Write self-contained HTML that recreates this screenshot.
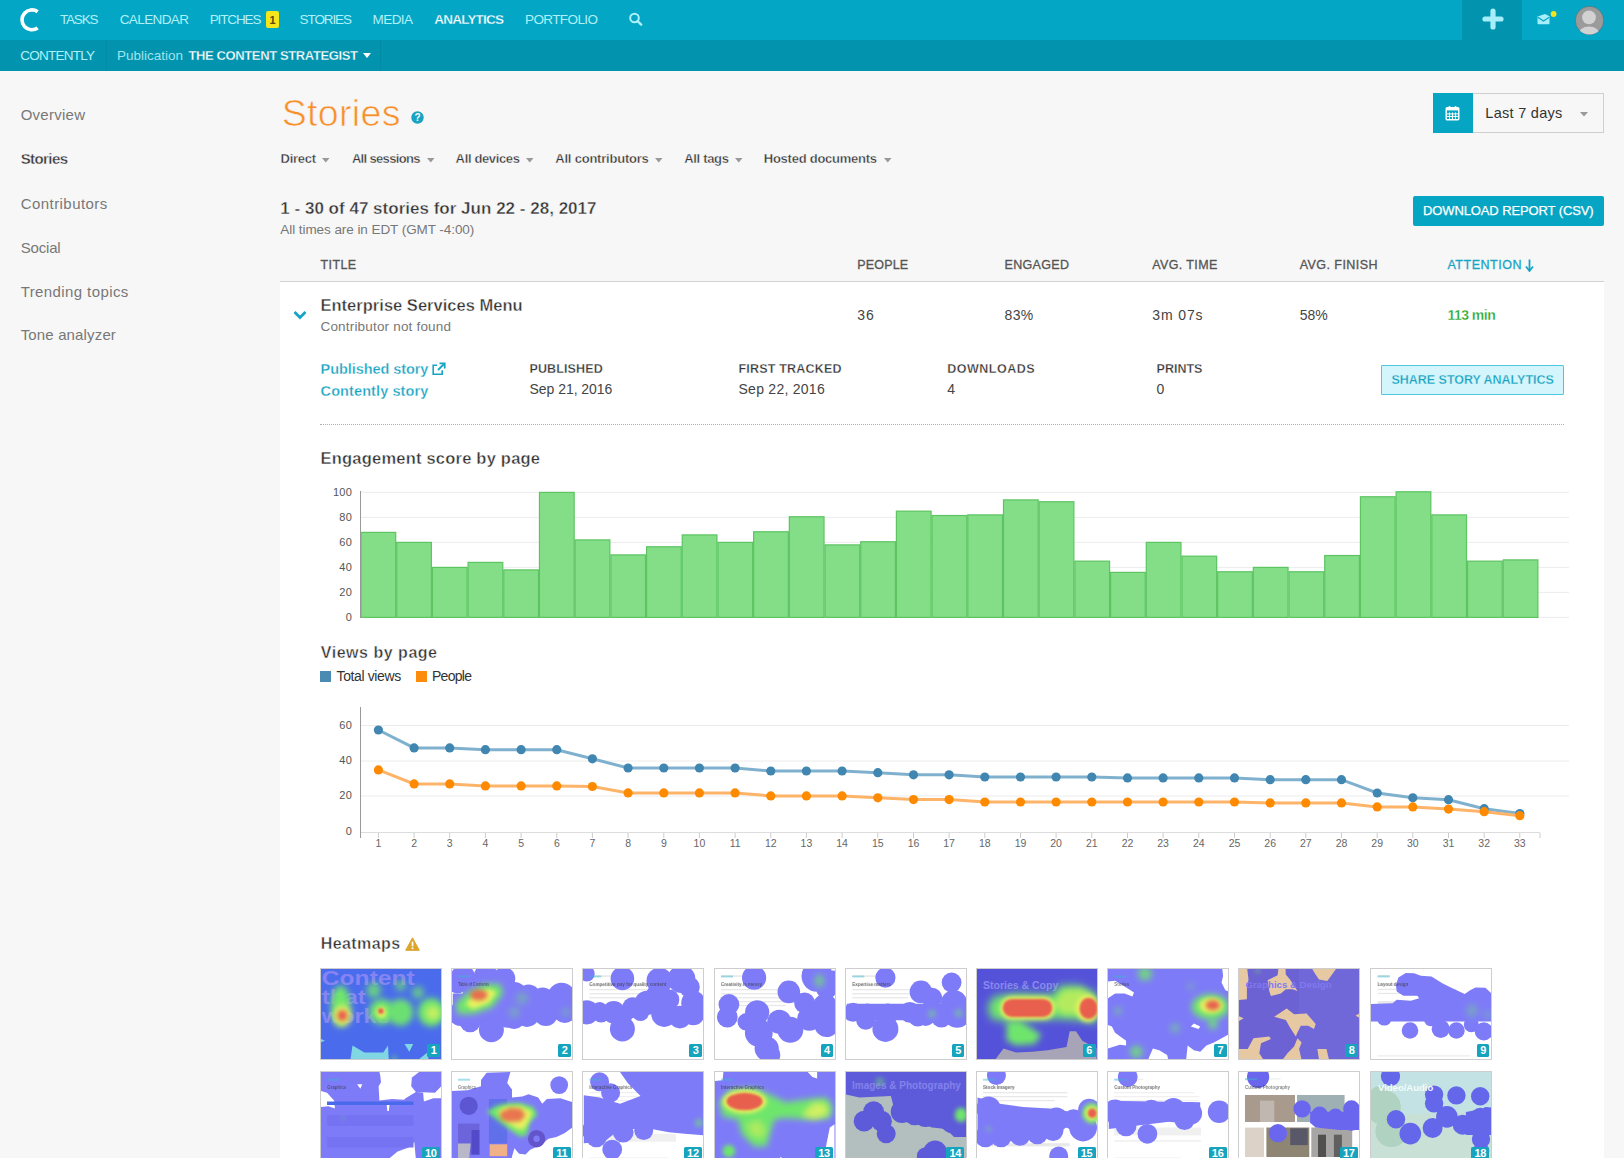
<!DOCTYPE html>
<html><head><meta charset="utf-8"><style>
html,body{margin:0;padding:0;width:1624px;height:1158px;overflow:hidden;background:#f7f7f7;font-family:"Liberation Sans", sans-serif;}
body{position:relative;}
</style></head><body>
<div style="position:absolute;left:0px;top:0px;width:1624px;height:40px;background:#03a6c5;"></div>
<div style="position:absolute;left:0px;top:40px;width:1624px;height:31px;background:#0294ae;"></div>
<div style="position:absolute;left:106px;top:40px;width:1px;height:31px;background:#028ba4;"></div>
<div style="position:absolute;left:380px;top:40px;width:1px;height:31px;background:#028ba4;"></div>
<div style="position:absolute;left:1462px;top:0px;width:60px;height:40px;background:#0294ae;"></div>
<svg style="position:absolute;left:18px;top:6px" width="24" height="28" viewBox="0 0 24 28"><path d="M19.66 5.7 A9.95 9.95 0 1 0 19.66 22.0" fill="none" stroke="#fff" stroke-width="3.6" stroke-linecap="butt"/></svg>
<div style="position:absolute;left:60.0px;top:12.83px;font-size:13.5px;line-height:13.5px;color:#b0f1f9;font-weight:400;letter-spacing:-1.191px;white-space:nowrap;">TASKS</div>
<div style="position:absolute;left:119.7px;top:12.83px;font-size:13.5px;line-height:13.5px;color:#b0f1f9;font-weight:400;letter-spacing:-0.604px;white-space:nowrap;">CALENDAR</div>
<div style="position:absolute;left:209.7px;top:12.83px;font-size:13.5px;line-height:13.5px;color:#b0f1f9;font-weight:400;letter-spacing:-1.136px;white-space:nowrap;">PITCHES</div>
<div style="position:absolute;left:299.6px;top:12.83px;font-size:13.5px;line-height:13.5px;color:#b0f1f9;font-weight:400;letter-spacing:-1.105px;white-space:nowrap;">STORIES</div>
<div style="position:absolute;left:372.6px;top:12.83px;font-size:13.5px;line-height:13.5px;color:#b0f1f9;font-weight:400;letter-spacing:-0.591px;white-space:nowrap;">MEDIA</div>
<div style="position:absolute;left:434.3px;top:12.83px;font-size:13.5px;line-height:13.5px;color:#fff;font-weight:700;letter-spacing:-0.789px;white-space:nowrap;-webkit-text-stroke:0.3px #03a6c5;">ANALYTICS</div>
<div style="position:absolute;left:525.0px;top:12.83px;font-size:13.5px;line-height:13.5px;color:#b0f1f9;font-weight:400;letter-spacing:-0.596px;white-space:nowrap;">PORTFOLIO</div>
<div style="position:absolute;left:266px;top:11px;width:13px;height:17px;background:#f4e61c;border-radius:2px;"></div>
<div style="position:absolute;left:72.5px;width:400px;text-align:center;top:14.65px;font-size:11px;line-height:11px;color:#5a4a10;font-weight:700;letter-spacing:0.000px;white-space:nowrap;">1</div>
<svg style="position:absolute;left:628px;top:12.3px" width="16" height="14" viewBox="0 0 16 14"><circle cx="6.5" cy="6" r="4.3" fill="none" stroke="#b0f1f9" stroke-width="2"/><line x1="9.6" y1="9.1" x2="13.2" y2="12.6" stroke="#b0f1f9" stroke-width="2.4" stroke-linecap="round"/></svg>
<div style="position:absolute;left:20.3px;top:48.82px;font-size:13.5px;line-height:13.5px;color:#b0f1f9;font-weight:400;letter-spacing:-0.758px;white-space:nowrap;">CONTENTLY</div>
<div style="position:absolute;left:117.0px;top:48.82px;font-size:13.5px;line-height:13.5px;color:#9fe3ee;font-weight:400;letter-spacing:-0.005px;white-space:nowrap;">Publication</div>
<div style="position:absolute;left:188.4px;top:49.25px;font-size:13px;line-height:13px;color:#fff;font-weight:700;letter-spacing:-0.373px;white-space:nowrap;-webkit-text-stroke:0.3px #0294ae;">THE CONTENT STRATEGIST</div>
<svg style="position:absolute;left:363px;top:53px" width="8" height="5"><path d="M0 0 L8 0 L4 5 Z" fill="#fff"/></svg>
<svg style="position:absolute;left:1482px;top:8px" width="22" height="22" viewBox="0 0 22 22"><path d="M11 3 V19 M3 11 H19" stroke="#a6eefa" stroke-width="5.2" stroke-linecap="round"/></svg>
<svg style="position:absolute;left:1535px;top:10px" width="24" height="18" viewBox="0 0 24 18"><path d="M2.5 6.5 L10 4 L14.5 6.3 V13.5 Q14.5 14.2 13.8 14.2 H3.2 Q2.5 14.2 2.5 13.5 Z" fill="#a6eefa"/><path d="M2.8 7.2 L8.5 11 L14.2 7.2" fill="none" stroke="#06a6c5" stroke-width="1.2"/><circle cx="18.6" cy="4" r="2.9" fill="#f5e41a"/></svg>
<svg style="position:absolute;left:1573.5px;top:4.5px" width="31" height="31" viewBox="0 0 31 31"><defs><clipPath id="av"><circle cx="15.5" cy="15.5" r="14"/></clipPath></defs><circle cx="15.5" cy="15.5" r="14.2" fill="#9b9b9b" stroke="#3f6f7a" stroke-width="0.6"/><g clip-path="url(#av)"><circle cx="15" cy="12.3" r="6.9" fill="#d2d2d2"/><ellipse cx="15" cy="30" rx="11" ry="8.5" fill="#d2d2d2"/></g></svg>
<div style="position:absolute;left:20.7px;top:107.25px;font-size:15px;line-height:15px;color:#777;font-weight:400;letter-spacing:0.255px;white-space:nowrap;">Overview</div>
<div style="position:absolute;left:20.7px;top:151.25px;font-size:15px;line-height:15px;color:#333;font-weight:700;letter-spacing:-0.593px;white-space:nowrap;-webkit-text-stroke:0.35px #f7f7f7;">Stories</div>
<div style="position:absolute;left:20.7px;top:195.55px;font-size:15px;line-height:15px;color:#777;font-weight:400;letter-spacing:0.445px;white-space:nowrap;">Contributors</div>
<div style="position:absolute;left:20.7px;top:239.55px;font-size:15px;line-height:15px;color:#777;font-weight:400;letter-spacing:-0.172px;white-space:nowrap;">Social</div>
<div style="position:absolute;left:20.7px;top:283.55px;font-size:15px;line-height:15px;color:#777;font-weight:400;letter-spacing:0.400px;white-space:nowrap;">Trending topics</div>
<div style="position:absolute;left:20.7px;top:327.45px;font-size:15px;line-height:15px;color:#777;font-weight:400;letter-spacing:0.149px;white-space:nowrap;">Tone analyzer</div>
<div style="position:absolute;left:281.8px;top:95.42px;font-size:37.5px;line-height:37.5px;color:#f7902c;font-weight:400;letter-spacing:0.314px;white-space:nowrap;-webkit-text-stroke:0.7px #f7f7f7;">Stories</div>
<svg style="position:absolute;left:411px;top:110.5px" width="13" height="13" viewBox="0 0 13 13"><circle cx="6.5" cy="6.5" r="6.2" fill="#18a3c3"/><text x="6.5" y="10.3" font-family="Liberation Sans" font-weight="700" font-size="10" fill="#fff" text-anchor="middle">?</text></svg>
<div style="position:absolute;left:280.5px;top:151.75px;font-size:13px;line-height:13px;color:#333;font-weight:700;letter-spacing:-0.232px;white-space:nowrap;-webkit-text-stroke:0.35px #f7f7f7;">Direct</div>
<svg style="position:absolute;left:322.3px;top:157.5px" width="8" height="5"><path d="M0 0 L7.5 0 L3.75 4.5 Z" fill="#999"/></svg>
<div style="position:absolute;left:351.9px;top:151.75px;font-size:13px;line-height:13px;color:#333;font-weight:700;letter-spacing:-0.661px;white-space:nowrap;-webkit-text-stroke:0.35px #f7f7f7;">All sessions</div>
<svg style="position:absolute;left:426.5px;top:157.5px" width="8" height="5"><path d="M0 0 L7.5 0 L3.75 4.5 Z" fill="#999"/></svg>
<div style="position:absolute;left:455.6px;top:151.75px;font-size:13px;line-height:13px;color:#333;font-weight:700;letter-spacing:-0.354px;white-space:nowrap;-webkit-text-stroke:0.35px #f7f7f7;">All devices</div>
<svg style="position:absolute;left:526.0px;top:157.5px" width="8" height="5"><path d="M0 0 L7.5 0 L3.75 4.5 Z" fill="#999"/></svg>
<div style="position:absolute;left:555.3px;top:151.75px;font-size:13px;line-height:13px;color:#333;font-weight:700;letter-spacing:-0.219px;white-space:nowrap;-webkit-text-stroke:0.35px #f7f7f7;">All contributors</div>
<svg style="position:absolute;left:655.0px;top:157.5px" width="8" height="5"><path d="M0 0 L7.5 0 L3.75 4.5 Z" fill="#999"/></svg>
<div style="position:absolute;left:684.2px;top:151.75px;font-size:13px;line-height:13px;color:#333;font-weight:700;letter-spacing:-0.310px;white-space:nowrap;-webkit-text-stroke:0.35px #f7f7f7;">All tags</div>
<svg style="position:absolute;left:735.0px;top:157.5px" width="8" height="5"><path d="M0 0 L7.5 0 L3.75 4.5 Z" fill="#999"/></svg>
<div style="position:absolute;left:763.8px;top:151.75px;font-size:13px;line-height:13px;color:#333;font-weight:700;letter-spacing:-0.254px;white-space:nowrap;-webkit-text-stroke:0.35px #f7f7f7;">Hosted documents</div>
<svg style="position:absolute;left:883.5px;top:157.5px" width="8" height="5"><path d="M0 0 L7.5 0 L3.75 4.5 Z" fill="#999"/></svg>
<div style="position:absolute;left:1433px;top:93px;width:170px;height:39px;border:1px solid #cfcfcf;background:#f7f7f7;box-sizing:border-box;width:171px;height:40px"></div>
<div style="position:absolute;left:1433px;top:93px;width:40px;height:40px;background:#07a5c4;"></div>
<svg style="position:absolute;left:1445px;top:105px" width="15" height="16" viewBox="0 0 15 16"><rect x="1.2" y="2.8" width="12.6" height="12" rx="1" fill="none" stroke="#fff" stroke-width="1.4"/><rect x="1.2" y="2.8" width="12.6" height="2.6" fill="#fff"/><path d="M4.5 7.5 V14.5 M7.5 7.5 V14.5 M10.5 7.5 V14.5 M1.5 8.9 H13.5 M1.5 11.4 H13.5" stroke="#fff" stroke-width="1"/><rect x="3.7" y="1" width="1.6" height="3" fill="#fff"/><rect x="9.7" y="1" width="1.6" height="3" fill="#fff"/></svg>
<div style="position:absolute;left:1485.3px;top:105.97px;font-size:14.5px;line-height:14.5px;color:#333;font-weight:400;letter-spacing:0.283px;white-space:nowrap;">Last 7 days</div>
<svg style="position:absolute;left:1580px;top:111.5px" width="8" height="5"><path d="M0 0 L8 0 L4 4.5 Z" fill="#999"/></svg>
<div style="position:absolute;left:280.3px;top:199.65px;font-size:17px;line-height:17px;color:#333;font-weight:700;letter-spacing:0.015px;white-space:nowrap;-webkit-text-stroke:0.4px #f7f7f7;">1 - 30 of 47 stories for Jun 22 - 28, 2017</div>
<div style="position:absolute;left:280.3px;top:223.12px;font-size:13.5px;line-height:13.5px;color:#777;font-weight:400;letter-spacing:-0.066px;white-space:nowrap;">All times are in EDT (GMT -4:00)</div>
<div style="position:absolute;left:1413px;top:196px;width:191px;height:30px;background:#07a5c4;border-radius:2px"></div>
<div style="position:absolute;left:1423.0px;top:204.35px;font-size:13px;line-height:13px;color:#fff;font-weight:400;letter-spacing:-0.114px;white-space:nowrap;-webkit-text-stroke:0.25px #fff;">DOWNLOAD REPORT (CSV)</div>
<div style="position:absolute;left:320.6px;top:259.07px;font-size:12.5px;line-height:12.5px;color:#555;font-weight:400;letter-spacing:0.388px;white-space:nowrap;-webkit-text-stroke:0.3px #555;">TITLE</div>
<div style="position:absolute;left:857.2px;top:259.07px;font-size:12.5px;line-height:12.5px;color:#555;font-weight:400;letter-spacing:0.194px;white-space:nowrap;-webkit-text-stroke:0.3px #555;">PEOPLE</div>
<div style="position:absolute;left:1004.5px;top:259.07px;font-size:12.5px;line-height:12.5px;color:#555;font-weight:400;letter-spacing:0.331px;white-space:nowrap;-webkit-text-stroke:0.3px #555;">ENGAGED</div>
<div style="position:absolute;left:1152.3px;top:259.07px;font-size:12.5px;line-height:12.5px;color:#555;font-weight:400;letter-spacing:0.367px;white-space:nowrap;-webkit-text-stroke:0.3px #555;">AVG. TIME</div>
<div style="position:absolute;left:1299.7px;top:259.07px;font-size:12.5px;line-height:12.5px;color:#555;font-weight:400;letter-spacing:0.441px;white-space:nowrap;-webkit-text-stroke:0.3px #555;">AVG. FINISH</div>
<div style="position:absolute;left:1447.4px;top:259.07px;font-size:12.5px;line-height:12.5px;color:#18a5c5;font-weight:400;letter-spacing:0.537px;white-space:nowrap;-webkit-text-stroke:0.3px #18a5c5;">ATTENTION</div>
<svg style="position:absolute;left:1525px;top:259px" width="9" height="13" viewBox="0 0 9 13"><path d="M4.5 0.5 V11" stroke="#18a5c5" stroke-width="1.8"/><path d="M1 7.5 L4.5 12 L8 7.5" fill="none" stroke="#18a5c5" stroke-width="1.8"/></svg>
<div style="position:absolute;left:280px;top:282px;width:1324px;height:876px;background:#fff;"></div>
<div style="position:absolute;left:280px;top:281px;width:1324px;height:1px;background:#d2d2d2;"></div>
<svg style="position:absolute;left:292px;top:309px" width="16" height="12" viewBox="0 0 16 12"><path d="M2.5 3 L8 8.5 L13.5 3" fill="none" stroke="#17a4c4" stroke-width="2.8"/></svg>
<div style="position:absolute;left:320.5px;top:297.18px;font-size:16.5px;line-height:16.5px;color:#333;font-weight:700;letter-spacing:0.015px;white-space:nowrap;-webkit-text-stroke:0.4px #fff;">Enterprise Services Menu</div>
<div style="position:absolute;left:320.5px;top:319.52px;font-size:13.5px;line-height:13.5px;color:#777;font-weight:400;letter-spacing:0.183px;white-space:nowrap;">Contributor not found</div>
<div style="position:absolute;left:857.2px;top:308.30px;font-size:14px;line-height:14px;color:#444;font-weight:400;letter-spacing:1.122px;white-space:nowrap;">36</div>
<div style="position:absolute;left:1004.5px;top:308.30px;font-size:14px;line-height:14px;color:#444;font-weight:400;letter-spacing:0.384px;white-space:nowrap;">83%</div>
<div style="position:absolute;left:1152.3px;top:308.30px;font-size:14px;line-height:14px;color:#444;font-weight:400;letter-spacing:0.876px;white-space:nowrap;">3m 07s</div>
<div style="position:absolute;left:1299.7px;top:308.30px;font-size:14px;line-height:14px;color:#444;font-weight:400;letter-spacing:-0.016px;white-space:nowrap;">58%</div>
<div style="position:absolute;left:1447.4px;top:308.30px;font-size:14px;line-height:14px;color:#21a51f;font-weight:700;letter-spacing:-0.513px;white-space:nowrap;-webkit-text-stroke:0.3px #fff;">113 min</div>
<div style="position:absolute;left:320.6px;top:361.98px;font-size:14.5px;line-height:14.5px;color:#18a4c4;font-weight:700;letter-spacing:-0.077px;white-space:nowrap;-webkit-text-stroke:0.3px #fff;">Published story</div>
<svg style="position:absolute;left:431px;top:362px" width="15" height="14" viewBox="0 0 15 14"><path d="M6 3.2 H2.2 V12.2 H11.2 V8.2" fill="none" stroke="#18a4c4" stroke-width="1.6"/><path d="M7 8 L13 2" stroke="#18a4c4" stroke-width="1.8"/><path d="M8.5 1.3 H13.7 V6.5" fill="none" stroke="#18a4c4" stroke-width="1.8"/></svg>
<div style="position:absolute;left:320.6px;top:383.98px;font-size:14.5px;line-height:14.5px;color:#18a4c4;font-weight:700;letter-spacing:0.097px;white-space:nowrap;-webkit-text-stroke:0.3px #fff;">Contently story</div>
<div style="position:absolute;left:529.5px;top:362.68px;font-size:12.5px;line-height:12.5px;color:#333;font-weight:700;letter-spacing:0.121px;white-space:nowrap;-webkit-text-stroke:0.3px #fff;">PUBLISHED</div>
<div style="position:absolute;left:529.5px;top:382.10px;font-size:14px;line-height:14px;color:#444;font-weight:400;letter-spacing:-0.036px;white-space:nowrap;">Sep 21, 2016</div>
<div style="position:absolute;left:738.5px;top:362.68px;font-size:12.5px;line-height:12.5px;color:#333;font-weight:700;letter-spacing:0.191px;white-space:nowrap;-webkit-text-stroke:0.3px #fff;">FIRST TRACKED</div>
<div style="position:absolute;left:738.5px;top:382.10px;font-size:14px;line-height:14px;color:#444;font-weight:400;letter-spacing:0.264px;white-space:nowrap;">Sep 22, 2016</div>
<div style="position:absolute;left:947.2px;top:362.68px;font-size:12.5px;line-height:12.5px;color:#333;font-weight:700;letter-spacing:0.521px;white-space:nowrap;-webkit-text-stroke:0.3px #fff;">DOWNLOADS</div>
<div style="position:absolute;left:947.2px;top:382.10px;font-size:14px;line-height:14px;color:#444;font-weight:400;letter-spacing:0.300px;white-space:nowrap;">4</div>
<div style="position:absolute;left:1156.6px;top:362.68px;font-size:12.5px;line-height:12.5px;color:#333;font-weight:700;letter-spacing:-0.009px;white-space:nowrap;-webkit-text-stroke:0.3px #fff;">PRINTS</div>
<div style="position:absolute;left:1156.6px;top:382.10px;font-size:14px;line-height:14px;color:#444;font-weight:400;letter-spacing:0.300px;white-space:nowrap;">0</div>
<div style="position:absolute;left:1381px;top:365px;width:183px;height:30px;box-sizing:border-box;background:#d3f5fb;border:1px solid #4fc7dc;border-radius:1px"></div>
<div style="position:absolute;left:1391.5px;top:373.98px;font-size:12.5px;line-height:12.5px;color:#18a0c0;font-weight:700;letter-spacing:-0.023px;white-space:nowrap;-webkit-text-stroke:0.3px #d3f5fb;">SHARE STORY ANALYTICS</div>
<div style="position:absolute;left:320px;top:424px;width:1244px;height:0;border-top:1px dotted #b0b0b0"></div>
<div style="position:absolute;left:320.5px;top:449.98px;font-size:16.5px;line-height:16.5px;color:#333;font-weight:700;letter-spacing:0.214px;white-space:nowrap;-webkit-text-stroke:0.4px #fff;">Engagement score by page</div>
<svg style="position:absolute;left:0;top:0" width="1624" height="1158"><line x1="361" y1="617.4" x2="1569" y2="617.4" stroke="#ececec" stroke-width="1"/><line x1="361" y1="592.4" x2="1569" y2="592.4" stroke="#ececec" stroke-width="1"/><line x1="361" y1="567.4" x2="1569" y2="567.4" stroke="#ececec" stroke-width="1"/><line x1="361" y1="542.4" x2="1569" y2="542.4" stroke="#ececec" stroke-width="1"/><line x1="361" y1="517.4" x2="1569" y2="517.4" stroke="#ececec" stroke-width="1"/><line x1="361" y1="492.4" x2="1569" y2="492.4" stroke="#ececec" stroke-width="1"/><rect x="361.00" y="532.40" width="34.69" height="85.00" fill="#84de88" stroke="#5cc461" stroke-width="1.2"/><rect x="396.69" y="542.40" width="34.69" height="75.00" fill="#84de88" stroke="#5cc461" stroke-width="1.2"/><rect x="432.39" y="567.40" width="34.69" height="50.00" fill="#84de88" stroke="#5cc461" stroke-width="1.2"/><rect x="468.08" y="562.40" width="34.69" height="55.00" fill="#84de88" stroke="#5cc461" stroke-width="1.2"/><rect x="503.78" y="569.90" width="34.69" height="47.50" fill="#84de88" stroke="#5cc461" stroke-width="1.2"/><rect x="539.47" y="492.40" width="34.69" height="125.00" fill="#84de88" stroke="#5cc461" stroke-width="1.2"/><rect x="575.16" y="539.90" width="34.69" height="77.50" fill="#84de88" stroke="#5cc461" stroke-width="1.2"/><rect x="610.86" y="554.90" width="34.69" height="62.50" fill="#84de88" stroke="#5cc461" stroke-width="1.2"/><rect x="646.55" y="546.77" width="34.69" height="70.62" fill="#84de88" stroke="#5cc461" stroke-width="1.2"/><rect x="682.25" y="534.90" width="34.69" height="82.50" fill="#84de88" stroke="#5cc461" stroke-width="1.2"/><rect x="717.94" y="542.40" width="34.69" height="75.00" fill="#84de88" stroke="#5cc461" stroke-width="1.2"/><rect x="753.63" y="531.77" width="34.69" height="85.62" fill="#84de88" stroke="#5cc461" stroke-width="1.2"/><rect x="789.33" y="516.77" width="34.69" height="100.62" fill="#84de88" stroke="#5cc461" stroke-width="1.2"/><rect x="825.02" y="544.90" width="34.69" height="72.50" fill="#84de88" stroke="#5cc461" stroke-width="1.2"/><rect x="860.72" y="541.77" width="34.69" height="75.62" fill="#84de88" stroke="#5cc461" stroke-width="1.2"/><rect x="896.41" y="511.15" width="34.69" height="106.25" fill="#84de88" stroke="#5cc461" stroke-width="1.2"/><rect x="932.10" y="515.52" width="34.69" height="101.88" fill="#84de88" stroke="#5cc461" stroke-width="1.2"/><rect x="967.80" y="514.90" width="34.69" height="102.50" fill="#84de88" stroke="#5cc461" stroke-width="1.2"/><rect x="1003.49" y="499.90" width="34.69" height="117.50" fill="#84de88" stroke="#5cc461" stroke-width="1.2"/><rect x="1039.18" y="501.77" width="34.69" height="115.62" fill="#84de88" stroke="#5cc461" stroke-width="1.2"/><rect x="1074.88" y="561.15" width="34.69" height="56.25" fill="#84de88" stroke="#5cc461" stroke-width="1.2"/><rect x="1110.57" y="572.40" width="34.69" height="45.00" fill="#84de88" stroke="#5cc461" stroke-width="1.2"/><rect x="1146.27" y="542.40" width="34.69" height="75.00" fill="#84de88" stroke="#5cc461" stroke-width="1.2"/><rect x="1181.96" y="556.15" width="34.69" height="61.25" fill="#84de88" stroke="#5cc461" stroke-width="1.2"/><rect x="1217.65" y="571.77" width="34.69" height="45.62" fill="#84de88" stroke="#5cc461" stroke-width="1.2"/><rect x="1253.35" y="567.40" width="34.69" height="50.00" fill="#84de88" stroke="#5cc461" stroke-width="1.2"/><rect x="1289.04" y="571.77" width="34.69" height="45.62" fill="#84de88" stroke="#5cc461" stroke-width="1.2"/><rect x="1324.74" y="555.52" width="34.69" height="61.88" fill="#84de88" stroke="#5cc461" stroke-width="1.2"/><rect x="1360.43" y="496.77" width="34.69" height="120.62" fill="#84de88" stroke="#5cc461" stroke-width="1.2"/><rect x="1396.12" y="491.77" width="34.69" height="125.62" fill="#84de88" stroke="#5cc461" stroke-width="1.2"/><rect x="1431.82" y="514.90" width="34.69" height="102.50" fill="#84de88" stroke="#5cc461" stroke-width="1.2"/><rect x="1467.51" y="561.15" width="34.69" height="56.25" fill="#84de88" stroke="#5cc461" stroke-width="1.2"/><rect x="1503.21" y="559.90" width="34.69" height="57.50" fill="#84de88" stroke="#5cc461" stroke-width="1.2"/><line x1="360.5" y1="491" x2="360.5" y2="618" stroke="#999" stroke-width="1"/></svg>
<div style="position:absolute;right:1272.0px;top:611.75px;font-size:11px;line-height:11px;color:#555;font-weight:400;letter-spacing:0.200px;white-space:nowrap;">0</div>
<div style="position:absolute;right:1272.0px;top:586.75px;font-size:11px;line-height:11px;color:#555;font-weight:400;letter-spacing:0.200px;white-space:nowrap;">20</div>
<div style="position:absolute;right:1272.0px;top:561.75px;font-size:11px;line-height:11px;color:#555;font-weight:400;letter-spacing:0.200px;white-space:nowrap;">40</div>
<div style="position:absolute;right:1272.0px;top:536.75px;font-size:11px;line-height:11px;color:#555;font-weight:400;letter-spacing:0.200px;white-space:nowrap;">60</div>
<div style="position:absolute;right:1272.0px;top:511.75px;font-size:11px;line-height:11px;color:#555;font-weight:400;letter-spacing:0.200px;white-space:nowrap;">80</div>
<div style="position:absolute;right:1272.0px;top:486.75px;font-size:11px;line-height:11px;color:#555;font-weight:400;letter-spacing:0.200px;white-space:nowrap;">100</div>
<div style="position:absolute;left:320.8px;top:645.40px;font-size:16px;line-height:16px;color:#333;font-weight:700;letter-spacing:0.518px;white-space:nowrap;-webkit-text-stroke:0.4px #fff;">Views by page</div>
<div style="position:absolute;left:320px;top:671px;width:11px;height:11px;background:#4a8ab3;"></div>
<div style="position:absolute;left:336.6px;top:669.30px;font-size:14px;line-height:14px;color:#333;font-weight:400;letter-spacing:-0.387px;white-space:nowrap;">Total views</div>
<div style="position:absolute;left:416px;top:671px;width:11px;height:11px;background:#fd8b0c;"></div>
<div style="position:absolute;left:432.0px;top:669.30px;font-size:14px;line-height:14px;color:#333;font-weight:400;letter-spacing:-0.719px;white-space:nowrap;">People</div>
<svg style="position:absolute;left:0;top:0" width="1624" height="1158"><line x1="361" y1="725.5" x2="1569" y2="725.5" stroke="#ececec" stroke-width="1"/><line x1="361" y1="761" x2="1569" y2="761" stroke="#ececec" stroke-width="1"/><line x1="361" y1="796" x2="1569" y2="796" stroke="#ececec" stroke-width="1"/><line x1="361" y1="832.5" x2="1540" y2="832.5" stroke="#ddd" stroke-width="1"/><line x1="360.5" y1="707" x2="360.5" y2="838" stroke="#999" stroke-width="1"/><line x1="378.4" y1="833" x2="378.4" y2="838" stroke="#ccc" stroke-width="1"/><line x1="414.1" y1="833" x2="414.1" y2="838" stroke="#ccc" stroke-width="1"/><line x1="449.7" y1="833" x2="449.7" y2="838" stroke="#ccc" stroke-width="1"/><line x1="485.4" y1="833" x2="485.4" y2="838" stroke="#ccc" stroke-width="1"/><line x1="521.1" y1="833" x2="521.1" y2="838" stroke="#ccc" stroke-width="1"/><line x1="556.8" y1="833" x2="556.8" y2="838" stroke="#ccc" stroke-width="1"/><line x1="592.4" y1="833" x2="592.4" y2="838" stroke="#ccc" stroke-width="1"/><line x1="628.1" y1="833" x2="628.1" y2="838" stroke="#ccc" stroke-width="1"/><line x1="663.8" y1="833" x2="663.8" y2="838" stroke="#ccc" stroke-width="1"/><line x1="699.4" y1="833" x2="699.4" y2="838" stroke="#ccc" stroke-width="1"/><line x1="735.1" y1="833" x2="735.1" y2="838" stroke="#ccc" stroke-width="1"/><line x1="770.8" y1="833" x2="770.8" y2="838" stroke="#ccc" stroke-width="1"/><line x1="806.4" y1="833" x2="806.4" y2="838" stroke="#ccc" stroke-width="1"/><line x1="842.1" y1="833" x2="842.1" y2="838" stroke="#ccc" stroke-width="1"/><line x1="877.8" y1="833" x2="877.8" y2="838" stroke="#ccc" stroke-width="1"/><line x1="913.5" y1="833" x2="913.5" y2="838" stroke="#ccc" stroke-width="1"/><line x1="949.1" y1="833" x2="949.1" y2="838" stroke="#ccc" stroke-width="1"/><line x1="984.8" y1="833" x2="984.8" y2="838" stroke="#ccc" stroke-width="1"/><line x1="1020.5" y1="833" x2="1020.5" y2="838" stroke="#ccc" stroke-width="1"/><line x1="1056.1" y1="833" x2="1056.1" y2="838" stroke="#ccc" stroke-width="1"/><line x1="1091.8" y1="833" x2="1091.8" y2="838" stroke="#ccc" stroke-width="1"/><line x1="1127.5" y1="833" x2="1127.5" y2="838" stroke="#ccc" stroke-width="1"/><line x1="1163.1" y1="833" x2="1163.1" y2="838" stroke="#ccc" stroke-width="1"/><line x1="1198.8" y1="833" x2="1198.8" y2="838" stroke="#ccc" stroke-width="1"/><line x1="1234.5" y1="833" x2="1234.5" y2="838" stroke="#ccc" stroke-width="1"/><line x1="1270.2" y1="833" x2="1270.2" y2="838" stroke="#ccc" stroke-width="1"/><line x1="1305.8" y1="833" x2="1305.8" y2="838" stroke="#ccc" stroke-width="1"/><line x1="1341.5" y1="833" x2="1341.5" y2="838" stroke="#ccc" stroke-width="1"/><line x1="1377.2" y1="833" x2="1377.2" y2="838" stroke="#ccc" stroke-width="1"/><line x1="1412.8" y1="833" x2="1412.8" y2="838" stroke="#ccc" stroke-width="1"/><line x1="1448.5" y1="833" x2="1448.5" y2="838" stroke="#ccc" stroke-width="1"/><line x1="1484.2" y1="833" x2="1484.2" y2="838" stroke="#ccc" stroke-width="1"/><line x1="1519.8" y1="833" x2="1519.8" y2="838" stroke="#ccc" stroke-width="1"/><line x1="1540.0" y1="833" x2="1540.0" y2="838" stroke="#ccc" stroke-width="1"/><polyline points="378.4,730.0 414.1,747.9 449.7,747.9 485.4,749.7 521.1,749.7 556.8,749.7 592.4,758.8 628.1,768.0 663.8,768.0 699.4,768.0 735.1,768.0 770.8,771.0 806.4,771.0 842.1,771.0 877.8,772.7 913.5,774.8 949.1,774.8 984.8,777.0 1020.5,777.0 1056.1,777.0 1091.8,777.0 1127.5,777.9 1163.1,777.9 1198.8,777.9 1234.5,777.9 1270.2,779.7 1305.8,779.7 1341.5,779.7 1377.2,793.0 1412.8,797.8 1448.5,799.7 1484.2,808.7 1519.8,813.5" fill="none" stroke="#7fb1cf" stroke-width="3"/><circle cx="378.4" cy="730.0" r="4.6" fill="#4086b0"/><circle cx="414.1" cy="747.9" r="4.6" fill="#4086b0"/><circle cx="449.7" cy="747.9" r="4.6" fill="#4086b0"/><circle cx="485.4" cy="749.7" r="4.6" fill="#4086b0"/><circle cx="521.1" cy="749.7" r="4.6" fill="#4086b0"/><circle cx="556.8" cy="749.7" r="4.6" fill="#4086b0"/><circle cx="592.4" cy="758.8" r="4.6" fill="#4086b0"/><circle cx="628.1" cy="768.0" r="4.6" fill="#4086b0"/><circle cx="663.8" cy="768.0" r="4.6" fill="#4086b0"/><circle cx="699.4" cy="768.0" r="4.6" fill="#4086b0"/><circle cx="735.1" cy="768.0" r="4.6" fill="#4086b0"/><circle cx="770.8" cy="771.0" r="4.6" fill="#4086b0"/><circle cx="806.4" cy="771.0" r="4.6" fill="#4086b0"/><circle cx="842.1" cy="771.0" r="4.6" fill="#4086b0"/><circle cx="877.8" cy="772.7" r="4.6" fill="#4086b0"/><circle cx="913.5" cy="774.8" r="4.6" fill="#4086b0"/><circle cx="949.1" cy="774.8" r="4.6" fill="#4086b0"/><circle cx="984.8" cy="777.0" r="4.6" fill="#4086b0"/><circle cx="1020.5" cy="777.0" r="4.6" fill="#4086b0"/><circle cx="1056.1" cy="777.0" r="4.6" fill="#4086b0"/><circle cx="1091.8" cy="777.0" r="4.6" fill="#4086b0"/><circle cx="1127.5" cy="777.9" r="4.6" fill="#4086b0"/><circle cx="1163.1" cy="777.9" r="4.6" fill="#4086b0"/><circle cx="1198.8" cy="777.9" r="4.6" fill="#4086b0"/><circle cx="1234.5" cy="777.9" r="4.6" fill="#4086b0"/><circle cx="1270.2" cy="779.7" r="4.6" fill="#4086b0"/><circle cx="1305.8" cy="779.7" r="4.6" fill="#4086b0"/><circle cx="1341.5" cy="779.7" r="4.6" fill="#4086b0"/><circle cx="1377.2" cy="793.0" r="4.6" fill="#4086b0"/><circle cx="1412.8" cy="797.8" r="4.6" fill="#4086b0"/><circle cx="1448.5" cy="799.7" r="4.6" fill="#4086b0"/><circle cx="1484.2" cy="808.7" r="4.6" fill="#4086b0"/><circle cx="1519.8" cy="813.5" r="4.6" fill="#4086b0"/><polyline points="378.4,769.9 414.1,783.9 449.7,783.9 485.4,785.9 521.1,785.9 556.8,785.9 592.4,786.5 628.1,792.9 663.8,792.9 699.4,792.9 735.1,792.9 770.8,795.9 806.4,795.9 842.1,795.9 877.8,797.8 913.5,799.6 949.1,799.6 984.8,802.0 1020.5,802.0 1056.1,802.0 1091.8,802.0 1127.5,802.0 1163.1,802.0 1198.8,802.0 1234.5,802.0 1270.2,802.9 1305.8,802.9 1341.5,802.9 1377.2,806.9 1412.8,806.9 1448.5,809.1 1484.2,811.7 1519.8,815.7" fill="none" stroke="#fdb468" stroke-width="3"/><circle cx="378.4" cy="769.9" r="4.6" fill="#fd8a00"/><circle cx="414.1" cy="783.9" r="4.6" fill="#fd8a00"/><circle cx="449.7" cy="783.9" r="4.6" fill="#fd8a00"/><circle cx="485.4" cy="785.9" r="4.6" fill="#fd8a00"/><circle cx="521.1" cy="785.9" r="4.6" fill="#fd8a00"/><circle cx="556.8" cy="785.9" r="4.6" fill="#fd8a00"/><circle cx="592.4" cy="786.5" r="4.6" fill="#fd8a00"/><circle cx="628.1" cy="792.9" r="4.6" fill="#fd8a00"/><circle cx="663.8" cy="792.9" r="4.6" fill="#fd8a00"/><circle cx="699.4" cy="792.9" r="4.6" fill="#fd8a00"/><circle cx="735.1" cy="792.9" r="4.6" fill="#fd8a00"/><circle cx="770.8" cy="795.9" r="4.6" fill="#fd8a00"/><circle cx="806.4" cy="795.9" r="4.6" fill="#fd8a00"/><circle cx="842.1" cy="795.9" r="4.6" fill="#fd8a00"/><circle cx="877.8" cy="797.8" r="4.6" fill="#fd8a00"/><circle cx="913.5" cy="799.6" r="4.6" fill="#fd8a00"/><circle cx="949.1" cy="799.6" r="4.6" fill="#fd8a00"/><circle cx="984.8" cy="802.0" r="4.6" fill="#fd8a00"/><circle cx="1020.5" cy="802.0" r="4.6" fill="#fd8a00"/><circle cx="1056.1" cy="802.0" r="4.6" fill="#fd8a00"/><circle cx="1091.8" cy="802.0" r="4.6" fill="#fd8a00"/><circle cx="1127.5" cy="802.0" r="4.6" fill="#fd8a00"/><circle cx="1163.1" cy="802.0" r="4.6" fill="#fd8a00"/><circle cx="1198.8" cy="802.0" r="4.6" fill="#fd8a00"/><circle cx="1234.5" cy="802.0" r="4.6" fill="#fd8a00"/><circle cx="1270.2" cy="802.9" r="4.6" fill="#fd8a00"/><circle cx="1305.8" cy="802.9" r="4.6" fill="#fd8a00"/><circle cx="1341.5" cy="802.9" r="4.6" fill="#fd8a00"/><circle cx="1377.2" cy="806.9" r="4.6" fill="#fd8a00"/><circle cx="1412.8" cy="806.9" r="4.6" fill="#fd8a00"/><circle cx="1448.5" cy="809.1" r="4.6" fill="#fd8a00"/><circle cx="1484.2" cy="811.7" r="4.6" fill="#fd8a00"/><circle cx="1519.8" cy="815.7" r="4.6" fill="#fd8a00"/></svg>
<div style="position:absolute;right:1272.0px;top:826.15px;font-size:11px;line-height:11px;color:#555;font-weight:400;letter-spacing:0.200px;white-space:nowrap;">0</div>
<div style="position:absolute;right:1272.0px;top:790.15px;font-size:11px;line-height:11px;color:#555;font-weight:400;letter-spacing:0.200px;white-space:nowrap;">20</div>
<div style="position:absolute;right:1272.0px;top:755.15px;font-size:11px;line-height:11px;color:#555;font-weight:400;letter-spacing:0.200px;white-space:nowrap;">40</div>
<div style="position:absolute;right:1272.0px;top:719.65px;font-size:11px;line-height:11px;color:#555;font-weight:400;letter-spacing:0.200px;white-space:nowrap;">60</div>
<div style="position:absolute;left:178.4px;width:400px;text-align:center;top:837.88px;font-size:10.5px;line-height:10.5px;color:#666;font-weight:400;letter-spacing:0.000px;white-space:nowrap;">1</div>
<div style="position:absolute;left:214.1px;width:400px;text-align:center;top:837.88px;font-size:10.5px;line-height:10.5px;color:#666;font-weight:400;letter-spacing:0.000px;white-space:nowrap;">2</div>
<div style="position:absolute;left:249.7px;width:400px;text-align:center;top:837.88px;font-size:10.5px;line-height:10.5px;color:#666;font-weight:400;letter-spacing:0.000px;white-space:nowrap;">3</div>
<div style="position:absolute;left:285.4px;width:400px;text-align:center;top:837.88px;font-size:10.5px;line-height:10.5px;color:#666;font-weight:400;letter-spacing:0.000px;white-space:nowrap;">4</div>
<div style="position:absolute;left:321.1px;width:400px;text-align:center;top:837.88px;font-size:10.5px;line-height:10.5px;color:#666;font-weight:400;letter-spacing:0.000px;white-space:nowrap;">5</div>
<div style="position:absolute;left:356.8px;width:400px;text-align:center;top:837.88px;font-size:10.5px;line-height:10.5px;color:#666;font-weight:400;letter-spacing:0.000px;white-space:nowrap;">6</div>
<div style="position:absolute;left:392.4px;width:400px;text-align:center;top:837.88px;font-size:10.5px;line-height:10.5px;color:#666;font-weight:400;letter-spacing:0.000px;white-space:nowrap;">7</div>
<div style="position:absolute;left:428.1px;width:400px;text-align:center;top:837.88px;font-size:10.5px;line-height:10.5px;color:#666;font-weight:400;letter-spacing:0.000px;white-space:nowrap;">8</div>
<div style="position:absolute;left:463.8px;width:400px;text-align:center;top:837.88px;font-size:10.5px;line-height:10.5px;color:#666;font-weight:400;letter-spacing:0.000px;white-space:nowrap;">9</div>
<div style="position:absolute;left:499.4px;width:400px;text-align:center;top:837.88px;font-size:10.5px;line-height:10.5px;color:#666;font-weight:400;letter-spacing:0.000px;white-space:nowrap;">10</div>
<div style="position:absolute;left:535.1px;width:400px;text-align:center;top:837.88px;font-size:10.5px;line-height:10.5px;color:#666;font-weight:400;letter-spacing:0.000px;white-space:nowrap;">11</div>
<div style="position:absolute;left:570.8px;width:400px;text-align:center;top:837.88px;font-size:10.5px;line-height:10.5px;color:#666;font-weight:400;letter-spacing:0.000px;white-space:nowrap;">12</div>
<div style="position:absolute;left:606.4px;width:400px;text-align:center;top:837.88px;font-size:10.5px;line-height:10.5px;color:#666;font-weight:400;letter-spacing:0.000px;white-space:nowrap;">13</div>
<div style="position:absolute;left:642.1px;width:400px;text-align:center;top:837.88px;font-size:10.5px;line-height:10.5px;color:#666;font-weight:400;letter-spacing:0.000px;white-space:nowrap;">14</div>
<div style="position:absolute;left:677.8px;width:400px;text-align:center;top:837.88px;font-size:10.5px;line-height:10.5px;color:#666;font-weight:400;letter-spacing:0.000px;white-space:nowrap;">15</div>
<div style="position:absolute;left:713.5px;width:400px;text-align:center;top:837.88px;font-size:10.5px;line-height:10.5px;color:#666;font-weight:400;letter-spacing:0.000px;white-space:nowrap;">16</div>
<div style="position:absolute;left:749.1px;width:400px;text-align:center;top:837.88px;font-size:10.5px;line-height:10.5px;color:#666;font-weight:400;letter-spacing:0.000px;white-space:nowrap;">17</div>
<div style="position:absolute;left:784.8px;width:400px;text-align:center;top:837.88px;font-size:10.5px;line-height:10.5px;color:#666;font-weight:400;letter-spacing:0.000px;white-space:nowrap;">18</div>
<div style="position:absolute;left:820.5px;width:400px;text-align:center;top:837.88px;font-size:10.5px;line-height:10.5px;color:#666;font-weight:400;letter-spacing:0.000px;white-space:nowrap;">19</div>
<div style="position:absolute;left:856.1px;width:400px;text-align:center;top:837.88px;font-size:10.5px;line-height:10.5px;color:#666;font-weight:400;letter-spacing:0.000px;white-space:nowrap;">20</div>
<div style="position:absolute;left:891.8px;width:400px;text-align:center;top:837.88px;font-size:10.5px;line-height:10.5px;color:#666;font-weight:400;letter-spacing:0.000px;white-space:nowrap;">21</div>
<div style="position:absolute;left:927.5px;width:400px;text-align:center;top:837.88px;font-size:10.5px;line-height:10.5px;color:#666;font-weight:400;letter-spacing:0.000px;white-space:nowrap;">22</div>
<div style="position:absolute;left:963.1px;width:400px;text-align:center;top:837.88px;font-size:10.5px;line-height:10.5px;color:#666;font-weight:400;letter-spacing:0.000px;white-space:nowrap;">23</div>
<div style="position:absolute;left:998.8px;width:400px;text-align:center;top:837.88px;font-size:10.5px;line-height:10.5px;color:#666;font-weight:400;letter-spacing:0.000px;white-space:nowrap;">24</div>
<div style="position:absolute;left:1034.5px;width:400px;text-align:center;top:837.88px;font-size:10.5px;line-height:10.5px;color:#666;font-weight:400;letter-spacing:0.000px;white-space:nowrap;">25</div>
<div style="position:absolute;left:1070.2px;width:400px;text-align:center;top:837.88px;font-size:10.5px;line-height:10.5px;color:#666;font-weight:400;letter-spacing:0.000px;white-space:nowrap;">26</div>
<div style="position:absolute;left:1105.8px;width:400px;text-align:center;top:837.88px;font-size:10.5px;line-height:10.5px;color:#666;font-weight:400;letter-spacing:0.000px;white-space:nowrap;">27</div>
<div style="position:absolute;left:1141.5px;width:400px;text-align:center;top:837.88px;font-size:10.5px;line-height:10.5px;color:#666;font-weight:400;letter-spacing:0.000px;white-space:nowrap;">28</div>
<div style="position:absolute;left:1177.2px;width:400px;text-align:center;top:837.88px;font-size:10.5px;line-height:10.5px;color:#666;font-weight:400;letter-spacing:0.000px;white-space:nowrap;">29</div>
<div style="position:absolute;left:1212.8px;width:400px;text-align:center;top:837.88px;font-size:10.5px;line-height:10.5px;color:#666;font-weight:400;letter-spacing:0.000px;white-space:nowrap;">30</div>
<div style="position:absolute;left:1248.5px;width:400px;text-align:center;top:837.88px;font-size:10.5px;line-height:10.5px;color:#666;font-weight:400;letter-spacing:0.000px;white-space:nowrap;">31</div>
<div style="position:absolute;left:1284.2px;width:400px;text-align:center;top:837.88px;font-size:10.5px;line-height:10.5px;color:#666;font-weight:400;letter-spacing:0.000px;white-space:nowrap;">32</div>
<div style="position:absolute;left:1319.8px;width:400px;text-align:center;top:837.88px;font-size:10.5px;line-height:10.5px;color:#666;font-weight:400;letter-spacing:0.000px;white-space:nowrap;">33</div>
<div style="position:absolute;left:320.7px;top:936.40px;font-size:16px;line-height:16px;color:#333;font-weight:700;letter-spacing:0.431px;white-space:nowrap;-webkit-text-stroke:0.4px #fff;">Heatmaps</div>
<svg style="position:absolute;left:405px;top:936.5px" width="15" height="14" viewBox="0 0 15 14"><path d="M7.5 0.8 L14.3 13.3 H0.7 Z" fill="#dba62b" stroke="#dba62b" stroke-width="1" stroke-linejoin="round"/><rect x="6.7" y="4.6" width="1.7" height="4.8" fill="#fff"/><rect x="6.7" y="10.4" width="1.7" height="1.7" fill="#fff"/></svg>
<svg width="0" height="0" style="position:absolute"><defs>
<filter id="bl1" x="-50%" y="-50%" width="200%" height="200%"><feGaussianBlur stdDeviation="1.2"/></filter>
<filter id="bl2" x="-50%" y="-50%" width="200%" height="200%"><feGaussianBlur stdDeviation="2"/></filter>
<filter id="bl3" x="-50%" y="-50%" width="200%" height="200%"><feGaussianBlur stdDeviation="3"/></filter>
<filter id="bl4" x="-50%" y="-50%" width="200%" height="200%"><feGaussianBlur stdDeviation="4.5"/></filter>
<radialGradient id="gfaint"><stop offset="0" stop-color="#7ed0a0" stop-opacity="0.8"/><stop offset="1" stop-color="#7ed0a0" stop-opacity="0"/></radialGradient>
<radialGradient id="ggreen"><stop offset="0" stop-color="#70e46a"/><stop offset="0.55" stop-color="#6ae070" stop-opacity="0.85"/><stop offset="1" stop-color="#6ae070" stop-opacity="0"/></radialGradient>
</defs></svg><div style="position:absolute;left:320.3px;top:968.2px;width:122px;height:91.5px;box-sizing:border-box;border:1px solid #cdcdcd;overflow:hidden;background:#fff"><svg width="120" height="90" viewBox="0 0 120 90" style="position:absolute;left:0;top:0"><rect width="122" height="92" fill="#4a6cec"/><polygon points="29.2,92.2 31.5,76.5 43.3,83.5 62.3,83.5 67.0,76.5 67.8,92.2" fill="#80d6e2" /><polygon points="83.5,74.9 92.2,74.9 88.3,82.8" fill="#80d6e2" /><polygon points="95.4,92.2 106.4,83.5 108.0,92.2" fill="#80d6e2" /><polygon points="0.0,70.1 3.9,71.7 0.0,73.3" fill="#80d6e2" /><text x="0.8" y="15.8" font-family="Liberation Sans" font-weight="700" font-size="21" fill="#8684f4" textLength="93" lengthAdjust="spacingAndGlyphs">Content</text><text x="0.8" y="34.7" font-family="Liberation Sans" font-weight="700" font-size="21" fill="#8684f4" textLength="44" lengthAdjust="spacingAndGlyphs">that</text><text x="0.8" y="54.4" font-family="Liberation Sans" font-weight="700" font-size="21" fill="#8684f4" textLength="68" lengthAdjust="spacingAndGlyphs">works</text><ellipse cx="19.7" cy="37.0" rx="9.5" ry="20.5" fill="#6ee66c" filter="url(#bl3)" opacity="1"/><ellipse cx="21.3" cy="46.5" rx="8.7" ry="10.2" fill="#e8f25e" filter="url(#bl3)" opacity="1"/><ellipse cx="21.3" cy="46.5" rx="5.0" ry="5.5" fill="#e8604e" filter="url(#bl2)" opacity="1"/><ellipse cx="60.7" cy="42.6" rx="12.6" ry="12.6" fill="#6ee66c" filter="url(#bl3)" opacity="1"/><ellipse cx="60.7" cy="43.3" rx="5.5" ry="5.5" fill="#e8f25e" filter="url(#bl2)" opacity="1"/><ellipse cx="59.9" cy="42.1" rx="2.8" ry="2.8" fill="#e8604e" filter="url(#bl1)" opacity="1"/><ellipse cx="79.6" cy="43.3" rx="12.6" ry="13.4" fill="#6ee66c" filter="url(#bl3)" opacity="0.95"/><ellipse cx="110.3" cy="43.3" rx="13.4" ry="14.2" fill="#6ee66c" filter="url(#bl3)" opacity="1"/><ellipse cx="111.9" cy="44.1" rx="7.1" ry="7.1" fill="#c8ee60" filter="url(#bl3)" opacity="1"/><ellipse cx="52.8" cy="21.3" rx="7.1" ry="7.9" fill="#6ee66c" filter="url(#bl3)" opacity="0.8"/><ellipse cx="79.6" cy="16.6" rx="5.5" ry="5.5" fill="#6ee66c" filter="url(#bl3)" opacity="0.7"/><ellipse cx="96.9" cy="23.6" rx="6.3" ry="6.3" fill="#6ee66c" filter="url(#bl3)" opacity="0.7"/><ellipse cx="73.3" cy="89.1" rx="3.2" ry="3.2" fill="#6ee66c" filter="url(#bl2)" opacity="0.4"/></svg></div><div style="position:absolute;left:427.3px;top:1044.2px;width:12.5px;height:13px;background:#16a3be;color:#fff;font-size:11px;line-height:13.5px;text-align:center;font-weight:700;border-radius:1.5px;letter-spacing:-0.3px">1</div><div style="position:absolute;left:451.3px;top:968.2px;width:122px;height:91.5px;box-sizing:border-box;border:1px solid #cdcdcd;overflow:hidden;background:#fff"><svg width="120" height="90" viewBox="0 0 120 90" style="position:absolute;left:0;top:0"><rect width="122" height="92" fill="#fff"/><rect x="5.5" y="6.3" width="18.9" height="1.6" fill="#e8e8e8"/><rect x="5.5" y="15.0" width="31.5" height="2.2" fill="#e8e8e8"/><rect x="8.7" y="20.5" width="36.3" height="1.3" fill="#e8e8e8"/><rect x="8.7" y="24.4" width="33.1" height="1.3" fill="#e8e8e8"/><rect x="8.7" y="32.3" width="31.5" height="1.3" fill="#e8e8e8"/><rect x="8.7" y="36.3" width="29.9" height="1.3" fill="#e8e8e8"/><rect x="8.7" y="40.2" width="41.0" height="1.3" fill="#e8e8e8"/><rect x="8.7" y="44.1" width="26.8" height="1.3" fill="#e8e8e8"/><rect x="8.7" y="48.1" width="22.1" height="1.3" fill="#e8e8e8"/><circle cx="11.0" cy="7.9" r="12.1" fill="#7e7bf8"/><circle cx="33.9" cy="7.1" r="12.1" fill="#7e7bf8"/><circle cx="52.0" cy="9.5" r="11.3" fill="#7e7bf8"/><circle cx="5.5" cy="15.0" r="9.5" fill="#7e7bf8"/><circle cx="24.4" cy="21.3" r="13.9" fill="#7e7bf8"/><circle cx="44.9" cy="21.3" r="13.0" fill="#7e7bf8"/><circle cx="62.3" cy="26.0" r="13.0" fill="#7e7bf8"/><circle cx="76.5" cy="27.6" r="12.1" fill="#7e7bf8"/><circle cx="90.6" cy="30.7" r="12.1" fill="#7e7bf8"/><circle cx="109.6" cy="27.6" r="13.9" fill="#7e7bf8"/><circle cx="112.7" cy="41.8" r="12.1" fill="#7e7bf8"/><circle cx="8.7" cy="44.9" r="12.1" fill="#7e7bf8"/><circle cx="24.4" cy="43.3" r="13.0" fill="#7e7bf8"/><circle cx="40.2" cy="48.1" r="12.1" fill="#7e7bf8"/><circle cx="56.0" cy="44.9" r="13.9" fill="#7e7bf8"/><circle cx="74.9" cy="44.9" r="13.0" fill="#7e7bf8"/><circle cx="93.8" cy="44.9" r="12.1" fill="#7e7bf8"/><circle cx="39.4" cy="60.7" r="12.5" fill="#7e7bf8"/><circle cx="18.1" cy="52.8" r="10.4" fill="#7e7bf8"/><circle cx="62.3" cy="49.7" r="10.4" fill="#7e7bf8"/><polygon points="0.8,24.4 120.6,24.4 120.6,48.1 0.8,49.7" fill="#7e7bf8" /><polygon points="3.9,33.9 16.6,22.9 32.3,15.0 48.1,15.0 51.2,24.4 40.2,38.6 21.3,44.9 5.5,44.9" fill="#6ee66c" filter="url(#bl3)" opacity="1"/><polygon points="13.4,35.5 22.9,24.4 37.0,19.7 44.9,22.9 37.0,33.9 21.3,40.2" fill="#e8f25e" filter="url(#bl2)" opacity="1"/><ellipse cx="26.8" cy="26.0" rx="8.7" ry="5.5" fill="#e8604e" filter="url(#bl2)" opacity="0.9"/><ellipse cx="70.1" cy="29.2" rx="6.3" ry="6.3" fill="#6ee66c" filter="url(#bl3)" opacity="0.35"/><ellipse cx="62.3" cy="43.3" rx="5.5" ry="5.5" fill="#6ee66c" filter="url(#bl3)" opacity="0.35"/><ellipse cx="114.3" cy="43.3" rx="4.7" ry="4.7" fill="#6ee66c" filter="url(#bl3)" opacity="0.3"/><text x="6.3" y="16.9" font-family="Liberation Sans" font-weight="700" font-size="5.5" fill="#333" opacity="0.6" textLength="30.7" lengthAdjust="spacingAndGlyphs">Table of Contents</text><rect x="6.3" y="6.399999999999999" width="12" height="2" fill="#38b8d0" opacity="0.45"/></svg></div><div style="position:absolute;left:558.3px;top:1044.2px;width:12.5px;height:13px;background:#16a3be;color:#fff;font-size:11px;line-height:13.5px;text-align:center;font-weight:700;border-radius:1.5px;letter-spacing:-0.3px">2</div><div style="position:absolute;left:582.4px;top:968.2px;width:122px;height:91.5px;box-sizing:border-box;border:1px solid #cdcdcd;overflow:hidden;background:#fff"><svg width="120" height="90" viewBox="0 0 120 90" style="position:absolute;left:0;top:0"><rect width="122" height="92" fill="#fff"/><rect x="6.3" y="6.3" width="29.2" height="1.6" fill="#e8e8e8"/><rect x="6.3" y="15.0" width="77.2" height="2.2" fill="#e8e8e8"/><rect x="6.3" y="20.0" width="73.3" height="1.3" fill="#e8e8e8"/><rect x="6.3" y="24.1" width="82.8" height="1.3" fill="#e8e8e8"/><rect x="6.3" y="28.1" width="78.0" height="1.3" fill="#e8e8e8"/><rect x="6.3" y="35.9" width="85.9" height="1.3" fill="#e8e8e8"/><rect x="6.3" y="39.9" width="85.9" height="1.3" fill="#e8e8e8"/><rect x="6.3" y="43.8" width="30.7" height="1.3" fill="#e8e8e8"/><circle cx="3.9" cy="4.7" r="7.8" fill="#7e7bf8"/><circle cx="39.4" cy="9.5" r="11.8" fill="#7e7bf8"/><circle cx="76.5" cy="11.8" r="13.0" fill="#7e7bf8"/><circle cx="98.5" cy="10.2" r="13.9" fill="#7e7bf8"/><circle cx="106.4" cy="18.1" r="10.4" fill="#7e7bf8"/><circle cx="110.3" cy="33.9" r="12.1" fill="#7e7bf8"/><circle cx="110.3" cy="44.9" r="11.3" fill="#7e7bf8"/><circle cx="3.9" cy="43.3" r="12.1" fill="#7e7bf8"/><circle cx="30.7" cy="43.3" r="11.3" fill="#7e7bf8"/><circle cx="49.7" cy="38.6" r="10.4" fill="#7e7bf8"/><circle cx="63.8" cy="33.9" r="12.1" fill="#7e7bf8"/><circle cx="81.2" cy="44.9" r="13.0" fill="#7e7bf8"/><circle cx="96.9" cy="48.1" r="11.3" fill="#7e7bf8"/><circle cx="39.4" cy="59.9" r="12.5" fill="#7e7bf8"/><circle cx="73.3" cy="26.0" r="10.4" fill="#7e7bf8"/><circle cx="85.9" cy="30.7" r="10.4" fill="#7e7bf8"/><circle cx="18.1" cy="44.9" r="8.7" fill="#7e7bf8"/><circle cx="57.5" cy="43.3" r="8.7" fill="#7e7bf8"/><circle cx="16.6" cy="41.8" r="8.7" fill="#7e7bf8"/><circle cx="41.8" cy="44.9" r="8.7" fill="#7e7bf8"/><text x="6.3" y="17" font-family="Liberation Sans" font-weight="700" font-size="5.5" fill="#333" opacity="0.6" textLength="77" lengthAdjust="spacingAndGlyphs">Competitive pay for quality content</text><rect x="6.3" y="6.5" width="12" height="2" fill="#38b8d0" opacity="0.45"/></svg></div><div style="position:absolute;left:689.4px;top:1044.2px;width:12.5px;height:13px;background:#16a3be;color:#fff;font-size:11px;line-height:13.5px;text-align:center;font-weight:700;border-radius:1.5px;letter-spacing:-0.3px">3</div><div style="position:absolute;left:713.6px;top:968.2px;width:122px;height:91.5px;box-sizing:border-box;border:1px solid #cdcdcd;overflow:hidden;background:#fff"><svg width="120" height="90" viewBox="0 0 120 90" style="position:absolute;left:0;top:0"><rect width="122" height="92" fill="#fff"/><rect x="6.0" y="6.3" width="28.4" height="1.6" fill="#e8e8e8"/><rect x="6.0" y="15.0" width="39.4" height="2.2" fill="#e8e8e8"/><rect x="6.0" y="20.0" width="72.5" height="1.3" fill="#e8e8e8"/><rect x="6.0" y="24.1" width="83.5" height="1.3" fill="#e8e8e8"/><rect x="6.0" y="28.1" width="77.2" height="1.3" fill="#e8e8e8"/><rect x="6.0" y="32.0" width="83.5" height="1.3" fill="#e8e8e8"/><rect x="6.0" y="35.9" width="64.6" height="1.3" fill="#e8e8e8"/><circle cx="39.1" cy="8.7" r="12.1" fill="#7e7bf8"/><circle cx="73.8" cy="22.9" r="11.3" fill="#7e7bf8"/><circle cx="89.5" cy="33.9" r="10.4" fill="#7e7bf8"/><circle cx="102.1" cy="7.1" r="15.6" fill="#7e7bf8"/><circle cx="111.6" cy="19.7" r="10.4" fill="#7e7bf8"/><circle cx="110.0" cy="37.0" r="12.1" fill="#7e7bf8"/><circle cx="111.6" cy="56.0" r="12.1" fill="#7e7bf8"/><circle cx="13.9" cy="35.5" r="10.4" fill="#7e7bf8"/><circle cx="12.3" cy="48.1" r="10.4" fill="#7e7bf8"/><circle cx="42.2" cy="43.3" r="12.1" fill="#7e7bf8"/><circle cx="43.8" cy="63.8" r="13.9" fill="#7e7bf8"/><circle cx="51.7" cy="79.6" r="12.1" fill="#7e7bf8"/><circle cx="64.3" cy="52.8" r="12.1" fill="#7e7bf8"/><circle cx="75.3" cy="60.7" r="13.0" fill="#7e7bf8"/><circle cx="94.3" cy="49.7" r="12.1" fill="#7e7bf8"/><circle cx="116.3" cy="44.9" r="6.9" fill="#7e7bf8"/><circle cx="54.9" cy="85.9" r="10.4" fill="#7e7bf8"/><circle cx="117.9" cy="10.2" r="8.7" fill="#7e7bf8"/><circle cx="31.2" cy="52.8" r="8.7" fill="#7e7bf8"/><ellipse cx="104.5" cy="11.8" rx="4.7" ry="6.3" fill="#6ee66c" filter="url(#bl3)" opacity="0.7"/><text x="6" y="17" font-family="Liberation Sans" font-weight="700" font-size="5.5" fill="#333" opacity="0.6" textLength="41" lengthAdjust="spacingAndGlyphs">Creativity is messy</text><rect x="6" y="6.5" width="12" height="2" fill="#38b8d0" opacity="0.45"/></svg></div><div style="position:absolute;left:820.6px;top:1044.2px;width:12.5px;height:13px;background:#16a3be;color:#fff;font-size:11px;line-height:13.5px;text-align:center;font-weight:700;border-radius:1.5px;letter-spacing:-0.3px">4</div><div style="position:absolute;left:844.8px;top:968.2px;width:122px;height:91.5px;box-sizing:border-box;border:1px solid #cdcdcd;overflow:hidden;background:#fff"><svg width="120" height="90" viewBox="0 0 120 90" style="position:absolute;left:0;top:0"><rect width="122" height="92" fill="#fff"/><rect x="6.3" y="6.3" width="29.2" height="1.6" fill="#e8e8e8"/><rect x="6.3" y="15.0" width="38.6" height="2.2" fill="#e8e8e8"/><rect x="6.3" y="20.0" width="81.2" height="1.3" fill="#e8e8e8"/><rect x="6.3" y="24.1" width="82.8" height="1.3" fill="#e8e8e8"/><rect x="6.3" y="28.1" width="56.0" height="1.3" fill="#e8e8e8"/><rect x="6.3" y="37.8" width="86.7" height="1.9" fill="#e8e8e8"/><circle cx="39.4" cy="8.7" r="10.1" fill="#7e7bf8"/><circle cx="105.6" cy="13.4" r="9.9" fill="#7e7bf8"/><circle cx="74.9" cy="22.9" r="11.3" fill="#7e7bf8"/><circle cx="85.9" cy="29.2" r="10.4" fill="#7e7bf8"/><circle cx="108.0" cy="33.9" r="13.0" fill="#7e7bf8"/><circle cx="111.1" cy="44.9" r="13.9" fill="#7e7bf8"/><circle cx="7.1" cy="43.3" r="9.5" fill="#7e7bf8"/><circle cx="21.3" cy="44.9" r="10.4" fill="#7e7bf8"/><circle cx="41.8" cy="44.9" r="10.4" fill="#7e7bf8"/><circle cx="63.8" cy="43.3" r="10.4" fill="#7e7bf8"/><circle cx="79.6" cy="46.5" r="10.4" fill="#7e7bf8"/><circle cx="95.4" cy="48.1" r="10.4" fill="#7e7bf8"/><circle cx="19.7" cy="51.2" r="9.5" fill="#7e7bf8"/><circle cx="39.4" cy="59.9" r="13.0" fill="#7e7bf8"/><circle cx="71.7" cy="48.1" r="9.5" fill="#7e7bf8"/><polygon points="0.8,34.7 120.6,34.7 120.6,51.2 0.8,51.2" fill="#7e7bf8" /><ellipse cx="85.9" cy="44.9" rx="4.4" ry="4.4" fill="#6ee66c" filter="url(#bl2)" opacity="0.4"/><ellipse cx="112.7" cy="44.1" rx="4.4" ry="4.4" fill="#6ee66c" filter="url(#bl2)" opacity="0.4"/><text x="6.3" y="17" font-family="Liberation Sans" font-weight="700" font-size="5.5" fill="#333" opacity="0.6" textLength="38.6" lengthAdjust="spacingAndGlyphs">Expertise matters</text><rect x="6.3" y="6.5" width="12" height="2" fill="#38b8d0" opacity="0.45"/></svg></div><div style="position:absolute;left:951.8px;top:1044.2px;width:12.5px;height:13px;background:#16a3be;color:#fff;font-size:11px;line-height:13.5px;text-align:center;font-weight:700;border-radius:1.5px;letter-spacing:-0.3px">5</div><div style="position:absolute;left:976px;top:968.2px;width:122px;height:91.5px;box-sizing:border-box;border:1px solid #cdcdcd;overflow:hidden;background:#fff"><svg width="120" height="90" viewBox="0 0 120 90" style="position:absolute;left:0;top:0"><rect width="122" height="92" fill="#5552da"/><polygon points="17.0,92.2 26.5,79.6 39.1,83.5 54.9,82.8 70.6,81.2 89.5,78.0 92.7,62.3 99.0,62.3 105.3,71.7 119.5,79.6 119.5,92.2" fill="#a6a4b6" /><text x="6" y="20" font-family="Liberation Sans" font-weight="700" font-size="10.5" fill="#8a88ee">Stories &amp; Copy</text><polygon points="10.7,37.0 17.0,27.6 39.1,24.4 75.3,26.0 83.2,16.6 102.1,16.6 119.5,24.4 119.5,54.4 102.1,51.2 80.1,49.7 54.9,51.2 31.2,52.8 13.9,49.7" fill="#6ee66c" filter="url(#bl4)" opacity="1"/><polygon points="29.6,71.7 29.6,52.8 42.2,51.2 64.3,65.4 58.0,74.9 39.1,76.5" fill="#6ee66c" filter="url(#bl3)" opacity="1"/><polygon points="75.3,35.5 86.4,21.3 105.3,19.7 117.9,29.2 111.6,44.9 86.4,44.9" fill="#c6ec5c" filter="url(#bl3)" opacity="0.8"/><rect x="23.3" y="27.6" width="54.4" height="22.9" rx="11.0" fill="#e8f25e" filter="url(#bl2)"/><rect x="25.7" y="29.9" width="49.7" height="18.1" rx="9.0" fill="#e8604e" filter="url(#bl1)"/><ellipse cx="110.8" cy="39.4" rx="11.8" ry="13.4" fill="#e8f25e" filter="url(#bl2)" opacity="1"/><ellipse cx="111.6" cy="39.4" rx="9.1" ry="10.7" fill="#e8604e" filter="url(#bl1)" opacity="1"/></svg></div><div style="position:absolute;left:1083.0px;top:1044.2px;width:12.5px;height:13px;background:#16a3be;color:#fff;font-size:11px;line-height:13.5px;text-align:center;font-weight:700;border-radius:1.5px;letter-spacing:-0.3px">6</div><div style="position:absolute;left:1107.2px;top:968.2px;width:122px;height:91.5px;box-sizing:border-box;border:1px solid #cdcdcd;overflow:hidden;background:#fff"><svg width="120" height="90" viewBox="0 0 120 90" style="position:absolute;left:0;top:0"><rect width="122" height="92" fill="#7e7bf8"/><polygon points="114.3,0.0 122.2,0.0 122.2,22.9 117.4,21.3 113.5,13.4 115.1,7.1" fill="#fff" /><polygon points="0.0,12.6 7.1,11.8 15.0,16.6 26.0,23.6 24.4,27.6 16.6,24.4 7.1,24.4 0.0,29.2" fill="#fff" /><polygon points="0.0,56.0 3.9,57.5 7.1,63.8 18.1,71.7 18.1,76.5 11.8,75.7 0.0,79.6" fill="#fff" /><polygon points="39.4,92.2 44.9,79.6 51.2,81.2 59.1,85.9 60.7,92.2" fill="#fff" /><polygon points="78.0,92.2 79.6,76.5 85.9,81.2 92.2,82.8 98.5,76.5 106.4,73.3 120.6,65.4 122.2,65.4 122.2,92.2" fill="#fff" /><polygon points="82.8,57.5 85.9,54.4 92.2,57.5 90.6,59.9" fill="#fff" /><ellipse cx="102.5" cy="37.8" rx="18.9" ry="12.6" fill="#6ee66c" filter="url(#bl3)" opacity="1"/><ellipse cx="104.8" cy="54.4" rx="4.7" ry="6.3" fill="#6ee66c" filter="url(#bl3)" opacity="0.8"/><ellipse cx="103.2" cy="36.7" rx="11.8" ry="7.9" fill="#e8f25e" filter="url(#bl2)" opacity="1"/><ellipse cx="104.8" cy="36.3" rx="7.1" ry="5.0" fill="#e8604e" filter="url(#bl2)" opacity="1"/><ellipse cx="37.0" cy="4.7" rx="7.1" ry="7.1" fill="#6ee66c" filter="url(#bl3)" opacity="0.8"/><ellipse cx="67.0" cy="59.1" rx="4.7" ry="4.7" fill="#6ee66c" filter="url(#bl3)" opacity="0.5"/><ellipse cx="28.4" cy="82.8" rx="6.3" ry="6.3" fill="#6ee66c" filter="url(#bl3)" opacity="0.8"/><ellipse cx="10.2" cy="41.8" rx="3.9" ry="3.9" fill="#6ee66c" filter="url(#bl3)" opacity="0.5"/><ellipse cx="82.8" cy="17.3" rx="3.9" ry="3.9" fill="#6ee66c" filter="url(#bl3)" opacity="0.3"/><text x="6.3" y="17" font-family="Liberation Sans" font-weight="700" font-size="5.5" fill="#333" opacity="0.6" textLength="15" lengthAdjust="spacingAndGlyphs">Stories</text><rect x="6.3" y="6.5" width="12" height="2" fill="#38b8d0" opacity="0.45"/></svg></div><div style="position:absolute;left:1214.2px;top:1044.2px;width:12.5px;height:13px;background:#16a3be;color:#fff;font-size:11px;line-height:13.5px;text-align:center;font-weight:700;border-radius:1.5px;letter-spacing:-0.3px">7</div><div style="position:absolute;left:1238.3px;top:968.2px;width:122px;height:91.5px;box-sizing:border-box;border:1px solid #cdcdcd;overflow:hidden;background:#fff"><svg width="120" height="90" viewBox="0 0 120 90" style="position:absolute;left:0;top:0"><rect width="122" height="92" fill="#7068d8"/><rect x="0" y="0" width="60" height="92" fill="#6a5fd0" opacity="0.6"/><polygon points="-2.9,-2.9 7.9,-2.9 9.5,10.4 7.9,18.7 7.9,30.3 -2.9,31.1" fill="#e6c9a2" /><polygon points="39.8,-2.9 46.4,-2.9 46.8,5.4 51.0,10.4 58.5,22.0 53.5,20.3 46.8,20.3 41.9,24.5 31.9,26.9 30.3,22.0 28.6,11.2 38.6,6.2" fill="#e6c9a2" /><polygon points="71.7,-2.9 99.1,-2.9 88.3,12.0 80.0,10.4 75.9,4.6" fill="#e6c9a2" /><polygon points="35.2,47.7 47.7,39.4 55.1,45.2 67.6,44.4 76.7,55.1 75.0,60.1 69.2,56.8 61.8,56.8 58.5,63.4 56.8,67.6 51.0,58.5 46.8,51.0" fill="#e6c9a2" /><polygon points="-2.9,80.0 8.7,80.0 14.5,69.2 30.3,67.6 31.9,70.1 22.0,74.2 20.3,84.2 24.5,90.8 -2.9,90.8" fill="#e6c9a2" /><polygon points="43.5,90.8 48.5,84.2 55.1,77.5 58.5,69.2 62.6,73.4 60.1,80.0 62.6,90.8" fill="#e6c9a2" /><polygon points="78.4,80.0 87.5,80.0 90.0,90.8 80.0,90.8" fill="#e6c9a2" /><polygon points="-2.9,46.0 4.6,49.3 -2.9,53.5" fill="#e6c9a2" /><polygon points="116.5,46.8 121.5,43.5 121.5,49.3" fill="#e6c9a2" /><text x="6.6" y="19" font-family="Liberation Sans" font-weight="700" font-size="9.5" textLength="86" lengthAdjust="spacingAndGlyphs" fill="#8078f0">Graphics &amp; Design</text><clipPath id="c8"><polygon points="-2.9,-2.9 7.9,-2.9 9.5,10.4 7.9,18.7 -2.9,18.7 "/></clipPath><ellipse cx="18.7" cy="2.1" rx="2.5" ry="2.1" fill="#6ee66c" filter="url(#bl2)" opacity="0.5"/></svg></div><div style="position:absolute;left:1345.3px;top:1044.2px;width:12.5px;height:13px;background:#16a3be;color:#fff;font-size:11px;line-height:13.5px;text-align:center;font-weight:700;border-radius:1.5px;letter-spacing:-0.3px">8</div><div style="position:absolute;left:1369.8px;top:968.2px;width:122px;height:91.5px;box-sizing:border-box;border:1px solid #cdcdcd;overflow:hidden;background:#fff"><svg width="120" height="90" viewBox="0 0 120 90" style="position:absolute;left:0;top:0"><rect width="122" height="92" fill="#fff"/><rect x="6.6" y="6.0" width="12.4" height="1.7" fill="#e8e8e8"/><rect x="6.6" y="14.3" width="30.7" height="2.5" fill="#e8e8e8"/><rect x="6.6" y="19.7" width="78.8" height="1.3" fill="#e8e8e8"/><rect x="6.6" y="23.8" width="37.3" height="1.3" fill="#e8e8e8"/><rect x="6.6" y="32.1" width="87.1" height="3.3" fill="#e8e8e8"/><rect x="6.6" y="86.4" width="92.9" height="1.0" fill="#e8e8e8"/><polygon points="24.9,15.9 27.4,8.5 34.8,3.9 43.1,4.3 49.8,6.8 60.5,7.6 71.3,14.3 81.3,19.2 93.7,25.0 99.5,20.9 104.5,18.4 114.4,18.8 121.1,25.0 121.1,35.8 0.0,35.8 0.0,35.0 21.6,34.2 25.7,30.8 39.8,31.7 48.1,29.2 46.4,26.7 32.3,26.7 25.7,22.6" fill="#7e7bf8" /><circle cx="13.3" cy="49.1" r="7.5" fill="#7e7bf8"/><circle cx="39.0" cy="61.5" r="8.3" fill="#7e7bf8"/><circle cx="69.7" cy="59.9" r="9.1" fill="#7e7bf8"/><circle cx="85.4" cy="61.5" r="8.3" fill="#7e7bf8"/><circle cx="100.3" cy="55.7" r="7.5" fill="#7e7bf8"/><circle cx="112.8" cy="62.4" r="9.1" fill="#7e7bf8"/><circle cx="59.7" cy="50.7" r="6.6" fill="#7e7bf8"/><polygon points="0.0,35.0 121.1,35.0 121.1,52.4 0.0,52.4" fill="#7e7bf8" /><ellipse cx="101.2" cy="41.6" rx="5.8" ry="6.6" fill="#6ee66c" filter="url(#bl3)" opacity="0.35"/><ellipse cx="116.9" cy="45.8" rx="4.1" ry="4.1" fill="#6ee66c" filter="url(#bl3)" opacity="0.3"/><text x="6.6" y="17" font-family="Liberation Sans" font-weight="700" font-size="5.5" fill="#333" opacity="0.6" textLength="30.7" lengthAdjust="spacingAndGlyphs">Layout design</text><rect x="6.6" y="6.5" width="12" height="2" fill="#38b8d0" opacity="0.45"/></svg></div><div style="position:absolute;left:1476.8px;top:1044.2px;width:12.5px;height:13px;background:#16a3be;color:#fff;font-size:11px;line-height:13.5px;text-align:center;font-weight:700;border-radius:1.5px;letter-spacing:-0.3px">9</div><div style="position:absolute;left:320.3px;top:1070.5px;width:122px;height:91.5px;box-sizing:border-box;border:1px solid #cdcdcd;overflow:hidden;background:#fff"><svg width="120" height="90" viewBox="0 0 120 90" style="position:absolute;left:0;top:0"><rect width="122" height="92" fill="#7e7bf8"/><polygon points="58.4,0.0 98.1,0.0 90.9,5.6 90.2,14.3 94.9,19.9 84.6,26.2 83.0,27.8 71.1,27.0 58.4,28.6 57.6,14.3 60.0,10.3 59.2,3.2" fill="#fff" /><polygon points="94.9,19.9 102.1,20.7 102.9,29.4 112.4,26.2 120.3,26.2 120.3,14.3 114.0,20.7" fill="#fff" /><polygon points="0.0,19.1 6.0,20.7 13.1,28.6 13.9,36.5 7.5,34.2 0.0,34.9" fill="#fff" /><polygon points="67.1,87.4 76.6,79.4 87.8,75.5 93.3,69.9 94.9,87.4" fill="#fff" /><polygon points="36.1,12.3 41.3,12.3 39.3,16.7" fill="#fff" /><polygon points="65.5,30.2 68.7,30.2 67.9,38.9 66.3,38.9" fill="#fff" /><polygon points="6.0,29.4 92.5,29.4 92.5,33.0 6.0,33.0" fill="#4a6aec" /><polygon points="6.0,42.9 92.5,42.9 92.5,54.0 6.0,54.0" fill="#7673f2" /><polygon points="6.0,65.1 92.5,65.1 92.5,75.5 6.0,75.5" fill="#7673f2" /><ellipse cx="21.8" cy="46.1" rx="2.0" ry="2.0" fill="#6ee66c" filter="url(#bl2)" opacity="0.3"/><text x="6.3" y="17.2" font-family="Liberation Sans" font-weight="700" font-size="5.5" fill="#333" opacity="0.6" textLength="19" lengthAdjust="spacingAndGlyphs">Graphics</text><rect x="6.3" y="6.699999999999999" width="12" height="2" fill="#38b8d0" opacity="0.45"/></svg></div><div style="position:absolute;left:421.8px;top:1146.5px;width:18px;height:13px;background:#16a3be;color:#fff;font-size:11px;line-height:13.5px;text-align:center;font-weight:700;border-radius:1.5px;letter-spacing:-0.3px">10</div><div style="position:absolute;left:451.3px;top:1070.5px;width:122px;height:91.5px;box-sizing:border-box;border:1px solid #cdcdcd;overflow:hidden;background:#fff"><svg width="120" height="90" viewBox="0 0 120 90" style="position:absolute;left:0;top:0"><rect width="122" height="92" fill="#fff"/><polygon points="0.0,19.1 15.5,18.3 29.0,14.3 29.0,7.9 34.6,0.8 58.4,0.0 55.2,11.1 60.0,17.5 60.0,25.4 70.3,24.6 76.6,22.2 86.2,25.4 90.2,31.8 94.9,27.0 108.4,26.2 120.3,30.2 120.3,55.6 112.4,61.2 104.4,65.1 96.5,66.7 88.6,73.1 78.2,77.8 73.5,82.6 67.1,81.8 62.4,76.3 59.2,87.2 0.0,87.2" fill="#7e7bf8" /><circle cx="107.2" cy="13.1" r="8.9" fill="#7e7bf8"/><circle cx="51.2" cy="82.6" r="8.7" fill="#7e7bf8"/><circle cx="16.7" cy="33.8" r="9.1" fill="#5c56d2"/><polygon points="6.0,51.6 27.4,51.6 27.4,82.6 6.0,82.6" fill="#6c64da" /><polygon points="19.5,58.0 27.4,58.0 27.4,82.6 19.5,82.6" fill="#524ac8" /><polygon points="6.0,71.5 18.7,71.5 17.1,87.2 6.0,87.2" fill="#b8b8c8" /><polygon points="36.9,27.0 55.2,27.0 55.2,71.5 36.9,71.5" fill="#6070ea" /><polygon points="37.7,72.3 55.2,72.3 55.2,84.2 37.7,84.2" fill="#f0b088" /><circle cx="84.6" cy="66.7" r="8.7" fill="#6454cc"/><circle cx="84.6" cy="66.7" r="3.2" fill="#7e7bf8"/><polygon points="34.6,39.7 44.9,33.4 57.6,31.0 68.7,31.0 81.4,34.9 85.4,42.9 77.4,50.8 75.1,62.7 68.7,65.1 59.2,58.8 48.8,50.8" fill="#6ee66c" filter="url(#bl2)" opacity="1"/><polygon points="44.9,39.7 52.8,34.9 68.7,34.2 80.6,39.7 76.6,49.2 71.9,57.2 65.5,57.2 54.4,50.0" fill="#e8f25e" filter="url(#bl2)" opacity="1"/><polygon points="48.1,40.5 57.6,35.7 68.7,36.5 73.5,42.9 68.7,49.2 57.6,50.0 48.8,47.7" fill="#e8604e" filter="url(#bl2)" opacity="0.85"/><text x="6" y="17.2" font-family="Liberation Sans" font-weight="700" font-size="5.5" fill="#333" opacity="0.6" textLength="18" lengthAdjust="spacingAndGlyphs">Graphics</text><rect x="6" y="6.699999999999999" width="12" height="2" fill="#38b8d0" opacity="0.45"/></svg></div><div style="position:absolute;left:552.8px;top:1146.5px;width:18px;height:13px;background:#16a3be;color:#fff;font-size:11px;line-height:13.5px;text-align:center;font-weight:700;border-radius:1.5px;letter-spacing:-0.3px">11</div><div style="position:absolute;left:582.4px;top:1070.5px;width:122px;height:91.5px;box-sizing:border-box;border:1px solid #cdcdcd;overflow:hidden;background:#fff"><svg width="120" height="90" viewBox="0 0 120 90" style="position:absolute;left:0;top:0"><rect width="122" height="92" fill="#fff"/><rect x="6.3" y="14.5" width="43.3" height="2.2" fill="#f0f0f0"/><rect x="6.3" y="20.0" width="76.5" height="1.3" fill="#f0f0f0"/><rect x="6.3" y="24.0" width="84.3" height="1.3" fill="#f0f0f0"/><rect x="6.3" y="27.9" width="84.3" height="1.3" fill="#f0f0f0"/><rect x="6.3" y="31.8" width="84.3" height="1.3" fill="#f0f0f0"/><rect x="6.3" y="35.8" width="26.0" height="1.3" fill="#f0f0f0"/><rect x="6.3" y="40.5" width="86.7" height="2.2" fill="#f0f0f0"/><rect x="6.3" y="61.8" width="86.7" height="7.9" fill="#f0f0f0"/><rect x="6.3" y="85.4" width="79.6" height="1.3" fill="#f0f0f0"/><circle cx="16.6" cy="9.8" r="9.5" fill="#7e7bf8"/><circle cx="27.6" cy="20.8" r="9.5" fill="#7e7bf8"/><circle cx="40.2" cy="60.2" r="10.4" fill="#7e7bf8"/><circle cx="60.7" cy="58.6" r="9.5" fill="#7e7bf8"/><circle cx="29.2" cy="77.6" r="9.9" fill="#7e7bf8"/><circle cx="13.4" cy="64.9" r="10.4" fill="#7e7bf8"/><circle cx="7.1" cy="58.6" r="8.7" fill="#7e7bf8"/><polygon points="37.0,0.0 122.2,0.0 122.2,63.4 101.7,61.8 85.9,60.2 76.5,58.6 68.6,57.1 37.0,57.1 21.3,69.7 0.8,71.2 0.8,23.2 16.6,25.5 37.0,31.8 57.5,24.0 44.9,11.3" fill="#7e7bf8" /><ellipse cx="115.9" cy="50.8" rx="4.4" ry="4.4" fill="#6ee66c" filter="url(#bl2)" opacity="0.5"/><text x="6.3" y="17.2" font-family="Liberation Sans" font-weight="700" font-size="5.5" fill="#333" opacity="0.6" textLength="43" lengthAdjust="spacingAndGlyphs">Interactive Graphics</text><rect x="6.3" y="6.699999999999999" width="12" height="2" fill="#38b8d0" opacity="0.45"/></svg></div><div style="position:absolute;left:683.9px;top:1146.5px;width:18px;height:13px;background:#16a3be;color:#fff;font-size:11px;line-height:13.5px;text-align:center;font-weight:700;border-radius:1.5px;letter-spacing:-0.3px">12</div><div style="position:absolute;left:713.6px;top:1070.5px;width:122px;height:91.5px;box-sizing:border-box;border:1px solid #cdcdcd;overflow:hidden;background:#fff"><svg width="120" height="90" viewBox="0 0 120 90" style="position:absolute;left:0;top:0"><rect width="122" height="92" fill="#7e7bf8"/><polygon points="0.0,0.0 8.4,0.0 7.6,8.2 0.0,9.0" fill="#fff" /><polygon points="92.7,0.0 102.1,0.0 102.1,6.6 97.4,5.0" fill="#fff" /><polygon points="114.8,55.5 119.5,52.3 119.5,90.2 108.4,90.2 111.6,71.2" fill="#fff" /><polygon points="62.7,90.2 65.9,84.6 69.0,90.2" fill="#fff" /><polygon points="4.4,30.3 15.4,17.7 39.1,16.1 54.9,22.4 70.6,30.3 94.3,27.1 111.6,25.5 117.9,35.0 114.8,46.0 94.3,47.6 70.6,46.0 59.6,47.6 54.9,61.8 51.7,74.4 39.1,74.4 26.5,61.8 23.3,47.6 7.6,44.5" fill="#6ee66c" filter="url(#bl3)" opacity="1"/><polygon points="86.4,42.9 99.0,30.3 111.6,31.8 113.2,42.9 99.0,47.6" fill="#e8f25e" filter="url(#bl3)" opacity="0.8"/><polygon points="31.2,52.3 43.8,47.6 51.7,58.6 47.0,66.5 35.9,63.4" fill="#c6ec5c" filter="url(#bl3)" opacity="0.7"/><ellipse cx="29.6" cy="29.5" rx="22.1" ry="11.8" fill="#e8f25e" filter="url(#bl2)" opacity="1"/><ellipse cx="29.6" cy="29.5" rx="18.1" ry="8.7" fill="#e8604e" filter="url(#bl1)" opacity="1"/><ellipse cx="13.9" cy="79.1" rx="6.3" ry="6.3" fill="#6ee66c" filter="url(#bl2)" opacity="1"/><text x="6" y="17.2" font-family="Liberation Sans" font-weight="700" font-size="5.5" fill="#333" opacity="0.6" textLength="43" lengthAdjust="spacingAndGlyphs">Interactive Graphics</text><rect x="6" y="6.699999999999999" width="12" height="2" fill="#38b8d0" opacity="0.45"/></svg></div><div style="position:absolute;left:815.1px;top:1146.5px;width:18px;height:13px;background:#16a3be;color:#fff;font-size:11px;line-height:13.5px;text-align:center;font-weight:700;border-radius:1.5px;letter-spacing:-0.3px">13</div><div style="position:absolute;left:844.8px;top:1070.5px;width:122px;height:91.5px;box-sizing:border-box;border:1px solid #cdcdcd;overflow:hidden;background:#fff"><svg width="120" height="90" viewBox="0 0 120 90" style="position:absolute;left:0;top:0"><rect width="122" height="92" fill="#b3bfbf"/><polygon points="0.0,0.0 122.2,0.0 122.2,64.9 108.0,64.9 100.1,57.1 85.9,55.5 68.6,47.6 49.7,42.9 44.9,24.0 13.4,25.5 0.0,22.4" fill="#5d5bd9" /><circle cx="27.6" cy="39.7" r="10.4" fill="#5d5bd9"/><circle cx="18.1" cy="49.2" r="10.4" fill="#5d5bd9"/><circle cx="35.5" cy="49.2" r="10.4" fill="#5d5bd9"/><circle cx="40.2" cy="61.8" r="9.5" fill="#5d5bd9"/><circle cx="56.0" cy="39.7" r="11.3" fill="#5d5bd9"/><circle cx="79.6" cy="42.9" r="12.1" fill="#5d5bd9"/><circle cx="89.1" cy="80.7" r="12.1" fill="#5d5bd9"/><circle cx="79.6" cy="83.9" r="8.7" fill="#5d5bd9"/><circle cx="108.0" cy="46.0" r="15.6" fill="#5d5bd9"/><circle cx="68.6" cy="42.9" r="10.4" fill="#5d5bd9"/><text x="6" y="17" font-family="Liberation Sans" font-weight="700" font-size="10" fill="#8482ec">Images &amp; Photography</text><ellipse cx="115.1" cy="42.9" rx="6.3" ry="7.1" fill="#6ee66c" filter="url(#bl2)" opacity="1"/><ellipse cx="33.9" cy="9.8" rx="4.7" ry="4.7" fill="#6ee66c" filter="url(#bl2)" opacity="0.4"/></svg></div><div style="position:absolute;left:946.3px;top:1146.5px;width:18px;height:13px;background:#16a3be;color:#fff;font-size:11px;line-height:13.5px;text-align:center;font-weight:700;border-radius:1.5px;letter-spacing:-0.3px">14</div><div style="position:absolute;left:976px;top:1070.5px;width:122px;height:91.5px;box-sizing:border-box;border:1px solid #cdcdcd;overflow:hidden;background:#fff"><svg width="120" height="90" viewBox="0 0 120 90" style="position:absolute;left:0;top:0"><rect width="122" height="92" fill="#fff"/><rect x="6.0" y="14.5" width="31.5" height="2.2" fill="#e8e8e8"/><rect x="6.0" y="20.0" width="84.3" height="1.3" fill="#e8e8e8"/><rect x="6.0" y="24.0" width="84.3" height="1.3" fill="#e8e8e8"/><rect x="6.0" y="27.9" width="71.7" height="1.3" fill="#e8e8e8"/><rect x="6.0" y="35.8" width="78.0" height="1.3" fill="#e8e8e8"/><rect x="6.0" y="39.7" width="78.0" height="1.3" fill="#e8e8e8"/><rect x="6.0" y="43.7" width="71.7" height="1.3" fill="#e8e8e8"/><rect x="6.0" y="48.4" width="86.7" height="2.2" fill="#e8e8e8"/><rect x="6.0" y="71.2" width="86.7" height="3.2" fill="#e8e8e8"/><circle cx="19.4" cy="3.5" r="9.5" fill="#7e7bf8"/><circle cx="81.7" cy="83.9" r="9.5" fill="#7e7bf8"/><circle cx="112.4" cy="38.1" r="11.3" fill="#7e7bf8"/><circle cx="106.1" cy="55.5" r="13.9" fill="#7e7bf8"/><circle cx="11.5" cy="36.6" r="12.1" fill="#7e7bf8"/><circle cx="24.1" cy="47.6" r="13.9" fill="#7e7bf8"/><circle cx="41.5" cy="55.5" r="15.6" fill="#7e7bf8"/><circle cx="63.5" cy="53.9" r="13.9" fill="#7e7bf8"/><circle cx="79.3" cy="47.6" r="12.1" fill="#7e7bf8"/><circle cx="96.6" cy="47.6" r="10.4" fill="#7e7bf8"/><circle cx="8.4" cy="64.9" r="10.4" fill="#7e7bf8"/><circle cx="24.1" cy="64.9" r="10.4" fill="#7e7bf8"/><circle cx="43.0" cy="63.4" r="10.4" fill="#7e7bf8"/><circle cx="60.4" cy="61.8" r="10.4" fill="#7e7bf8"/><circle cx="76.1" cy="58.6" r="10.4" fill="#7e7bf8"/><polygon points="0.5,25.5 22.5,31.8 46.2,35.0 71.4,36.6 93.5,39.7 93.5,55.5 0.5,61.8" fill="#7e7bf8" /><ellipse cx="114.8" cy="41.3" rx="9.5" ry="10.2" fill="#6ee66c" filter="url(#bl2)" opacity="1"/><ellipse cx="114.8" cy="41.3" rx="6.6" ry="7.1" fill="#e8f25e" filter="url(#bl2)" opacity="1"/><ellipse cx="115.2" cy="41.3" rx="4.4" ry="4.7" fill="#e8604e" filter="url(#bl1)" opacity="1"/><ellipse cx="11.5" cy="57.1" rx="3.2" ry="3.2" fill="#6ee66c" filter="url(#bl2)" opacity="0.3"/><text x="6" y="17.2" font-family="Liberation Sans" font-weight="700" font-size="5.5" fill="#333" opacity="0.6" textLength="31.5" lengthAdjust="spacingAndGlyphs">Stock Imagery</text><rect x="6" y="6.699999999999999" width="12" height="2" fill="#38b8d0" opacity="0.45"/></svg></div><div style="position:absolute;left:1077.5px;top:1146.5px;width:18px;height:13px;background:#16a3be;color:#fff;font-size:11px;line-height:13.5px;text-align:center;font-weight:700;border-radius:1.5px;letter-spacing:-0.3px">15</div><div style="position:absolute;left:1107.2px;top:1070.5px;width:122px;height:91.5px;box-sizing:border-box;border:1px solid #cdcdcd;overflow:hidden;background:#fff"><svg width="120" height="90" viewBox="0 0 120 90" style="position:absolute;left:0;top:0"><rect width="122" height="92" fill="#fff"/><rect x="6.3" y="6.6" width="29.2" height="1.6" fill="#f0f0f0"/><rect x="6.3" y="14.5" width="45.7" height="2.2" fill="#f0f0f0"/><rect x="6.3" y="20.0" width="79.6" height="1.3" fill="#f0f0f0"/><rect x="6.3" y="24.0" width="85.1" height="1.3" fill="#f0f0f0"/><rect x="6.3" y="27.9" width="84.3" height="1.3" fill="#f0f0f0"/><rect x="6.3" y="31.8" width="84.3" height="1.3" fill="#f0f0f0"/><rect x="6.3" y="55.5" width="86.7" height="7.9" fill="#f0f0f0"/><rect x="6.3" y="68.1" width="86.7" height="1.6" fill="#f0f0f0"/><rect x="6.3" y="85.4" width="67.0" height="1.3" fill="#f0f0f0"/><circle cx="19.7" cy="5.0" r="9.9" fill="#7e7bf8"/><circle cx="39.4" cy="61.8" r="9.9" fill="#7e7bf8"/><circle cx="18.1" cy="53.9" r="10.4" fill="#7e7bf8"/><circle cx="111.1" cy="39.7" r="11.3" fill="#7e7bf8"/><circle cx="65.4" cy="38.1" r="12.1" fill="#7e7bf8"/><circle cx="82.8" cy="41.3" r="11.3" fill="#7e7bf8"/><circle cx="43.3" cy="38.1" r="10.4" fill="#7e7bf8"/><circle cx="7.1" cy="39.7" r="12.1" fill="#7e7bf8"/><circle cx="26.0" cy="42.9" r="10.4" fill="#7e7bf8"/><circle cx="76.5" cy="47.6" r="10.4" fill="#7e7bf8"/><polygon points="0.8,28.7 92.2,30.3 92.2,46.0 0.8,57.1" fill="#7e7bf8" /><text x="6.3" y="17.2" font-family="Liberation Sans" font-weight="700" font-size="5.5" fill="#333" opacity="0.6" textLength="45.7" lengthAdjust="spacingAndGlyphs">Custom Photography</text><rect x="6.3" y="6.699999999999999" width="12" height="2" fill="#38b8d0" opacity="0.45"/></svg></div><div style="position:absolute;left:1208.7px;top:1146.5px;width:18px;height:13px;background:#16a3be;color:#fff;font-size:11px;line-height:13.5px;text-align:center;font-weight:700;border-radius:1.5px;letter-spacing:-0.3px">16</div><div style="position:absolute;left:1238.3px;top:1070.5px;width:122px;height:91.5px;box-sizing:border-box;border:1px solid #cdcdcd;overflow:hidden;background:#fff"><svg width="120" height="90" viewBox="0 0 120 90" style="position:absolute;left:0;top:0"><rect width="122" height="92" fill="#fff"/><rect x="6.0" y="6.4" width="35.7" height="1.0" fill="#e4eef0"/><polygon points="6.0,23.0 56.0,23.0 56.0,50.0 6.0,50.0" fill="#a89a8c" /><polygon points="21.0,28.6 35.3,28.6 35.3,50.0 21.0,50.0" fill="#c0b8b0" /><polygon points="58.0,23.0 105.6,23.0 105.6,50.0 58.0,50.0" fill="#9eb0b4" /><polygon points="6.0,55.6 25.0,55.6 25.0,85.0 6.0,85.0" fill="#ddd2c8" /><polygon points="27.4,55.6 70.3,55.6 70.3,85.0 27.4,85.0" fill="#8e8672" /><polygon points="51.2,56.4 68.7,56.4 68.7,73.1 51.2,73.1" fill="#585868" /><polygon points="72.3,55.6 113.2,55.6 113.2,85.0 72.3,85.0" fill="#a8a6a4" /><polygon points="79.0,62.7 87.0,62.7 87.0,85.0 79.0,85.0" fill="#505050" /><polygon points="94.9,62.7 102.9,62.7 102.9,85.0 94.9,85.0" fill="#606060" /><circle cx="19.1" cy="4.8" r="11.1" fill="#6a66ee"/><circle cx="63.1" cy="36.9" r="8.7" fill="#6a66ee"/><circle cx="112.4" cy="36.5" r="8.3" fill="#6a66ee"/><circle cx="80.6" cy="42.9" r="8.3" fill="#6a66ee"/><circle cx="96.5" cy="44.5" r="7.9" fill="#6a66ee"/><circle cx="112.4" cy="50.8" r="7.9" fill="#6a66ee"/><circle cx="38.9" cy="61.2" r="9.1" fill="#6a66ee"/><polygon points="71.1,39.7 120.3,39.7 120.3,58.0 100.5,58.0 76.6,55.6 71.1,50.8" fill="#6a66ee" /><text x="6" y="16.7" font-family="Liberation Sans" font-weight="700" font-size="5.5" fill="#333" opacity="0.6" textLength="45" lengthAdjust="spacingAndGlyphs">Custom Photography</text><rect x="6" y="6.199999999999999" width="12" height="2" fill="#38b8d0" opacity="0.45"/></svg></div><div style="position:absolute;left:1339.8px;top:1146.5px;width:18px;height:13px;background:#16a3be;color:#fff;font-size:11px;line-height:13.5px;text-align:center;font-weight:700;border-radius:1.5px;letter-spacing:-0.3px">17</div><div style="position:absolute;left:1369.8px;top:1070.5px;width:122px;height:91.5px;box-sizing:border-box;border:1px solid #cdcdcd;overflow:hidden;background:#fff"><svg width="120" height="90" viewBox="0 0 120 90" style="position:absolute;left:0;top:0"><rect width="122" height="92" fill="#c3e2e3"/><polygon points="0.0,43.3 120.3,40.1 120.3,87.8 0.0,87.8" fill="#c8e0d6" /><circle cx="12.3" cy="35.3" r="17.5" fill="#b0d2c0"/><circle cx="20.3" cy="59.2" r="15.9" fill="#b0d2c0"/><circle cx="8.3" cy="23.4" r="9.5" fill="#b0d2c0"/><circle cx="19.5" cy="4.4" r="9.6" fill="#6467ea"/><circle cx="63.1" cy="22.6" r="9.2" fill="#6467ea"/><circle cx="63.1" cy="31.4" r="9.2" fill="#6467ea"/><circle cx="85.4" cy="23.4" r="9.2" fill="#6467ea"/><circle cx="109.2" cy="24.2" r="9.2" fill="#6467ea"/><circle cx="25.0" cy="47.3" r="9.2" fill="#6467ea"/><circle cx="39.3" cy="61.6" r="10.8" fill="#6467ea"/><circle cx="61.6" cy="56.0" r="10.0" fill="#6467ea"/><circle cx="75.9" cy="44.9" r="10.8" fill="#6467ea"/><circle cx="91.7" cy="52.8" r="10.0" fill="#6467ea"/><circle cx="109.2" cy="44.9" r="9.2" fill="#6467ea"/><circle cx="110.0" cy="67.1" r="9.2" fill="#6467ea"/><circle cx="115.6" cy="40.1" r="5.0" fill="#6467ea"/><circle cx="110.0" cy="79.0" r="8.3" fill="#6467ea"/><polygon points="94.9,40.1 120.3,35.3 120.3,63.1 94.9,63.1" fill="#6467ea" /><text x="7" y="19" font-family="Liberation Sans" font-weight="700" font-size="9.5" fill="#f4fbfb">Video/Audio</text></svg></div><div style="position:absolute;left:1471.3px;top:1146.5px;width:18px;height:13px;background:#16a3be;color:#fff;font-size:11px;line-height:13.5px;text-align:center;font-weight:700;border-radius:1.5px;letter-spacing:-0.3px">18</div>
</body></html>
